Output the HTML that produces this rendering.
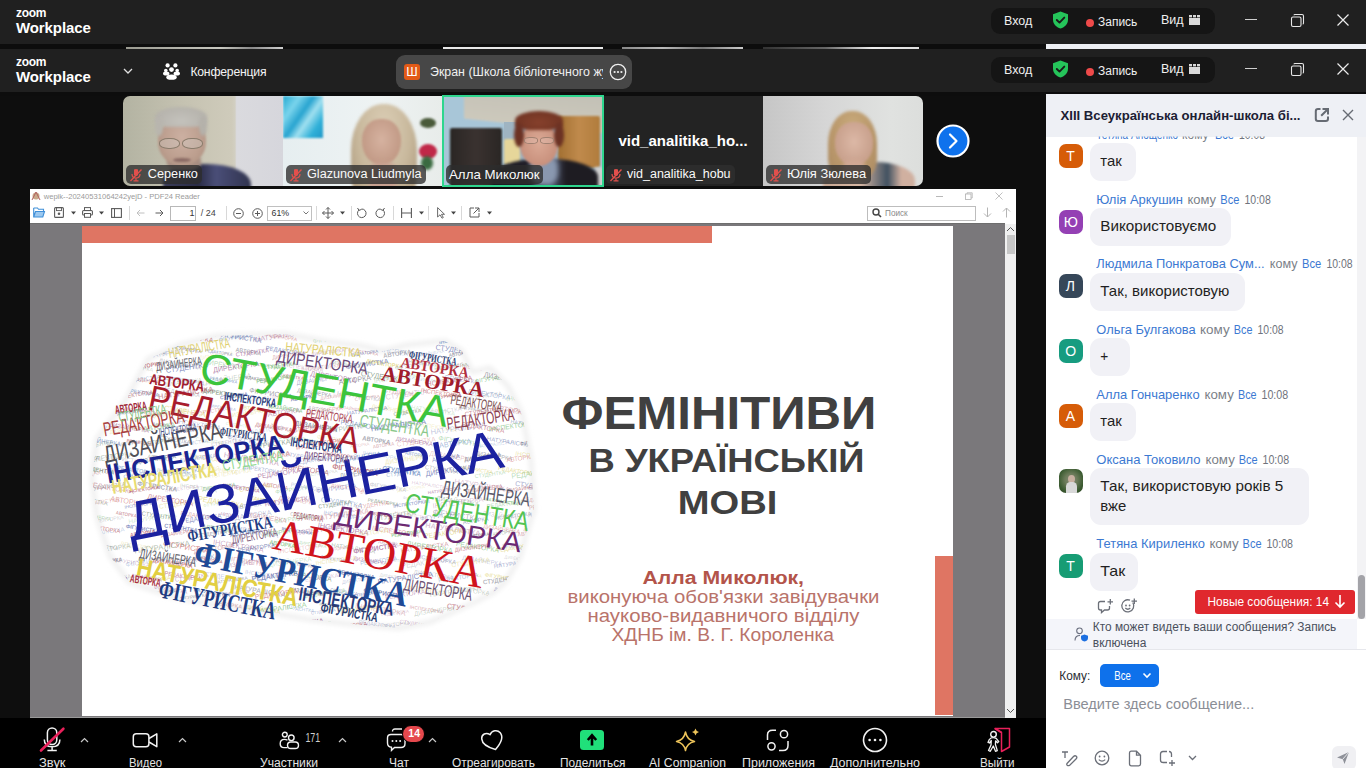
<!DOCTYPE html>
<html><head><meta charset="utf-8">
<style>
*{margin:0;padding:0;box-sizing:border-box}
html,body{width:1366px;height:768px;overflow:hidden;background:#111;font-family:"Liberation Sans",sans-serif}
.a{position:absolute}
.t{position:absolute;white-space:nowrap;line-height:1}
svg{position:absolute;overflow:visible}
</style></head><body>

<div class="a" style="left:0px;top:0px;width:1366px;height:44px;background:#202020;"></div>
<div class="t" style="left:16.00px;top:6.84px;font-size:12px;color:#fff;font-weight:700;letter-spacing:-0.3px;">zoom</div>
<div class="t" style="left:16.00px;top:19.80px;font-size:15px;color:#fff;font-weight:700;letter-spacing:-0.1px;">Workplace</div>
<div class="a" style="left:991px;top:8px;width:224px;height:26px;background:#151515;border-radius:9px;"></div>
<div class="t" style="left:1004.00px;top:14.72px;font-size:12.5px;color:#f0f0f0;">Вход</div>
<svg style="left:1052px;top:11px" width="17" height="18" viewBox="0 0 17 18"><path d="M8.5 0.5 L16 3.2 V8.5 C16 13 12.8 16.3 8.5 17.6 C4.2 16.3 1 13 1 8.5 V3.2 Z" fill="#25c45a"/><path d="M4.8 9 L7.5 11.6 L12.3 6.6" stroke="#1a1a1a" stroke-width="1.9" fill="none" stroke-linecap="round" stroke-linejoin="round"/></svg>
<div class="a" style="left:1086px;top:18.5px;width:8px;height:8px;border-radius:50%;background:#ee4a4a"></div>
<div class="t" style="left:1098.00px;top:16.14px;font-size:12px;color:#f0f0f0;">Запись</div>
<div class="t" style="left:1161.00px;top:14.02px;font-size:12.5px;color:#f0f0f0;">Вид</div>
<svg style="left:1189px;top:15px" width="11" height="10" viewBox="0 0 11 10"><rect x="0" y="3" width="11" height="7" fill="#d9d9d9"/><rect x="0" y="0" width="3" height="2.4" fill="#d9d9d9"/><rect x="4" y="0" width="3" height="2.4" fill="#d9d9d9"/><rect x="8" y="0" width="3" height="2.4" fill="#d9d9d9"/></svg>
<div class="a" style="left:1245px;top:19px;width:12px;height:1.3px;background:#cfcfcf;"></div>
<svg style="left:1290px;top:13px" width="15" height="15" viewBox="0 0 15 15"><rect x="1.5" y="4" width="9.5" height="9.5" rx="1.5" fill="none" stroke="#e8e8e8" stroke-width="1.1"/><path d="M4 2.3 Q4 1.5 5 1.5 H12 Q13.5 1.5 13.5 3 V10 Q13.5 11 12.7 11" fill="none" stroke="#e8e8e8" stroke-width="1.1"/></svg>
<svg style="left:1336px;top:13px" width="14" height="14" viewBox="0 0 14 14"><path d="M1.5 1.5 L12.5 12.5 M12.5 1.5 L1.5 12.5" stroke="#ececec" stroke-width="1.2"/></svg>
<div class="a" style="left:0px;top:44px;width:1366px;height:5px;background:#0d0d0d;"></div>
<div class="a" style="left:126px;top:47px;width:157px;height:1.6px;background:linear-gradient(90deg,#9a9a90,#c8c8c0 60%,#888 80%,#d0d0d0)"></div>
<div class="a" style="left:443px;top:47px;width:160px;height:1.6px;background:#e8e8e8"></div>
<div class="a" style="left:622px;top:47px;width:121px;height:1.6px;background:linear-gradient(90deg,#888,#bbb,#777,#ccc)"></div>
<div class="a" style="left:763px;top:47px;width:156px;height:1.6px;background:linear-gradient(90deg,#333,#666 40%,#eee 70%,#ddd)"></div>
<div class="a" style="left:1046px;top:44px;width:320px;height:5px;background:#eef0f5;"></div>
<div class="a" style="left:0px;top:49px;width:1366px;height:44px;background:#202020;"></div>
<div class="t" style="left:16.00px;top:55.84px;font-size:12px;color:#fff;font-weight:700;letter-spacing:-0.3px;">zoom</div>
<div class="t" style="left:16.00px;top:68.80px;font-size:15px;color:#fff;font-weight:700;letter-spacing:-0.1px;">Workplace</div>
<div class="a" style="left:991px;top:57px;width:224px;height:26px;background:#151515;border-radius:9px;"></div>
<div class="t" style="left:1004.00px;top:63.72px;font-size:12.5px;color:#f0f0f0;">Вход</div>
<svg style="left:1052px;top:60px" width="17" height="18" viewBox="0 0 17 18"><path d="M8.5 0.5 L16 3.2 V8.5 C16 13 12.8 16.3 8.5 17.6 C4.2 16.3 1 13 1 8.5 V3.2 Z" fill="#25c45a"/><path d="M4.8 9 L7.5 11.6 L12.3 6.6" stroke="#1a1a1a" stroke-width="1.9" fill="none" stroke-linecap="round" stroke-linejoin="round"/></svg>
<div class="a" style="left:1086px;top:67.5px;width:8px;height:8px;border-radius:50%;background:#ee4a4a"></div>
<div class="t" style="left:1098.00px;top:65.14px;font-size:12px;color:#f0f0f0;">Запись</div>
<div class="t" style="left:1161.00px;top:63.02px;font-size:12.5px;color:#f0f0f0;">Вид</div>
<svg style="left:1189px;top:64px" width="11" height="10" viewBox="0 0 11 10"><rect x="0" y="3" width="11" height="7" fill="#d9d9d9"/><rect x="0" y="0" width="3" height="2.4" fill="#d9d9d9"/><rect x="4" y="0" width="3" height="2.4" fill="#d9d9d9"/><rect x="8" y="0" width="3" height="2.4" fill="#d9d9d9"/></svg>
<div class="a" style="left:1245px;top:68px;width:12px;height:1.3px;background:#cfcfcf;"></div>
<svg style="left:1290px;top:62px" width="15" height="15" viewBox="0 0 15 15"><rect x="1.5" y="4" width="9.5" height="9.5" rx="1.5" fill="none" stroke="#e8e8e8" stroke-width="1.1"/><path d="M4 2.3 Q4 1.5 5 1.5 H12 Q13.5 1.5 13.5 3 V10 Q13.5 11 12.7 11" fill="none" stroke="#e8e8e8" stroke-width="1.1"/></svg>
<svg style="left:1336px;top:62px" width="14" height="14" viewBox="0 0 14 14"><path d="M1.5 1.5 L12.5 12.5 M12.5 1.5 L1.5 12.5" stroke="#ececec" stroke-width="1.2"/></svg>
<svg style="left:123px;top:67px" width="10" height="8" viewBox="0 0 10 8"><path d="M1 2 L5 6 L9 2" stroke="#e0e0e0" stroke-width="1.3" fill="none"/></svg>
<svg style="left:163px;top:63px" width="17" height="17" viewBox="0 0 17 17"><circle cx="4.6" cy="2.4" r="2.1" fill="#fff"/><circle cx="12.4" cy="2.4" r="2.1" fill="#fff"/><circle cx="2.8" cy="7.6" r="1.8" fill="#fff"/><circle cx="14.2" cy="7.6" r="1.8" fill="#fff"/><circle cx="8.5" cy="6.6" r="2.4" fill="#fff"/><ellipse cx="8.5" cy="14.2" rx="5.2" ry="2.6" fill="#fff"/><ellipse cx="3.2" cy="10.6" rx="3.2" ry="2" fill="#fff"/><ellipse cx="13.8" cy="10.6" rx="3.2" ry="2" fill="#fff"/></svg>
<div class="t" style="left:190.40px;top:65.87px;font-size:12.2px;color:#f4f4f4;letter-spacing:-0.2px;">Конференция</div>
<div class="a" style="left:396px;top:55px;width:236px;height:34px;background:#474747;border-radius:9px;"></div>
<div class="a" style="left:404px;top:64px;width:16px;height:16px;background:#e25a17;border-radius:3px;"></div>
<div class="t" style="left:406.30px;top:65.92px;font-size:12.5px;color:#fff;">Ш</div>
<div class="a" style="left:430px;top:60px;width:173px;height:24px;overflow:hidden">
<div class="t" style="left:0.00px;top:5.50px;font-size:12.4px;color:#f0f0f0;">Экран (Школа бібліотечного журналіста)</div>
</div>
<svg style="left:609px;top:63px" width="18" height="18" viewBox="0 0 18 18"><circle cx="9" cy="9" r="7.7" fill="none" stroke="#efefef" stroke-width="1.3"/><circle cx="5.6" cy="9" r="1.1" fill="#efefef"/><circle cx="9" cy="9" r="1.1" fill="#efefef"/><circle cx="12.4" cy="9" r="1.1" fill="#efefef"/></svg>
<div class="a" style="left:0px;top:92px;width:1046px;height:626px;background:#0e0e0e;"></div>
<div class="a" style="left:0px;top:92px;width:1046px;height:4px;background:#0d0d0d;"></div>
<div class="a" style="left:123px;top:96px;width:160px;height:90px;overflow:hidden;border-radius:7px 0 0 7px;background:linear-gradient(90deg,#b3b3a2 0%,#c6c3b2 40%,#cfcbbb 68%,#d2cfc2 70%,#dadade 71%,#d6d6dc 100%)">
<div class="a" style="left:40px;top:68px;width:88px;height:40px;border-radius:40% 50% 0 0;background:linear-gradient(90deg,#3a3c58,#2a2c46 40%,#4a4e78 60%,#30334e);filter:blur(1.5px);"></div>
<div class="a" style="left:44px;top:58px;width:34px;height:16px;border-radius:40%;background:#a88e82;filter:blur(1.5px);"></div>
<div class="a" style="left:35px;top:22px;width:48px;height:48px;border-radius:46% 46% 50% 50%;background:radial-gradient(ellipse at 50% 40%,#ccb0a2,#bc9e8e 60%,#a48878);filter:blur(1.3px);"></div>
<div class="a" style="left:32px;top:11px;width:52px;height:20px;border-radius:50% 50% 25% 25%;background:radial-gradient(ellipse at 50% 70%,#c4c2bc,#b0ada6);filter:blur(1.4px);"></div>
<div class="a" style="left:32px;top:22px;width:8px;height:18px;border-radius:50%;background:#b8b5ae;filter:blur(1.5px);"></div>
<div class="a" style="left:76px;top:20px;width:8px;height:20px;border-radius:50%;background:#b4b1aa;filter:blur(1.5px);"></div>
<div class="a" style="left:36px;top:42px;width:21px;height:11px;border-radius:45%;background:rgba(210,205,200,.35);filter:blur(0.5px);border:1.2px solid #8a7c6c;"></div>
<div class="a" style="left:59px;top:42px;width:21px;height:11px;border-radius:45%;background:rgba(210,205,200,.35);filter:blur(0.5px);border:1.2px solid #8a7c6c;"></div>
<div class="a" style="left:50px;top:62px;width:18px;height:4px;border-radius:50%;background:#8a6a64;filter:blur(1px);"></div>
</div>
<div class="a" style="left:126px;top:165px;width:76px;height:19px;border-radius:5px;background:rgba(45,45,45,.78)"></div>
<svg style="left:129px;top:168px" width="14" height="14" viewBox="0 0 14 14"><path d="M5 1.5 Q7 0.5 9 1.5 V7 Q7 9 5 7 Z" fill="#e2504c"/><path d="M3 6 Q3 10 7 10 Q11 10 11 6 M7 10 V12.5 M4.5 12.8 H9.5" stroke="#e2504c" stroke-width="1.2" fill="none"/><path d="M1.5 13 L12.5 1.5" stroke="#e2504c" stroke-width="1.3"/></svg>
<div class="t" style="left:147.80px;top:168.05px;font-size:12.7px;color:#fafafa;">Серенко</div>
<div class="a" style="left:283px;top:96px;width:159px;height:90px;overflow:hidden;background:linear-gradient(90deg,#e6eef0,#eef3f3 60%,#e8ecea)">
<div class="a" style="left:0;top:0;width:40px;height:42px;background:linear-gradient(125deg,#22a8d0 0%,#7ad4ec 25%,#28a4d0 45%,#a0e0f0 60%,#30b0d8 80%,#2098c8 100%);filter:blur(0.8px)"></div>
<div class="a" style="left:68px;top:8px;width:66px;height:96px;border-radius:48% 48% 25% 25%;background:radial-gradient(ellipse at 50% 30%,#ddd0b8,#c8b89c 55%,#a89478);filter:blur(1.5px);"></div>
<div class="a" style="left:79px;top:23px;width:39px;height:46px;border-radius:45% 45% 50% 50%;background:radial-gradient(ellipse at 50% 45%,#d6b2a0,#c29a86 70%,#a88070);filter:blur(1.2px);"></div>
<div class="a" style="left:85px;top:66px;width:30px;height:30px;border-radius:40%;background:#c8a090;filter:blur(2px);"></div>
<div class="a" style="left:136px;top:48px;width:18px;height:15px;border-radius:50%;background:#c02848;filter:blur(1.3px);"></div>
<div class="a" style="left:138px;top:60px;width:12px;height:14px;border-radius:50%;background:#3a6a40;filter:blur(1.5px);"></div>
<div class="a" style="left:137px;top:22px;width:16px;height:10px;border-radius:50%;background:#4a5a3a;filter:blur(1.3px);"></div>
</div>
<div class="a" style="left:286px;top:165px;width:140px;height:19px;border-radius:5px;background:rgba(45,45,45,.78)"></div>
<svg style="left:289px;top:168px" width="14" height="14" viewBox="0 0 14 14"><path d="M5 1.5 Q7 0.5 9 1.5 V7 Q7 9 5 7 Z" fill="#e2504c"/><path d="M3 6 Q3 10 7 10 Q11 10 11 6 M7 10 V12.5 M4.5 12.8 H9.5" stroke="#e2504c" stroke-width="1.2" fill="none"/><path d="M1.5 13 L12.5 1.5" stroke="#e2504c" stroke-width="1.3"/></svg>
<div class="t" style="left:307.00px;top:168.09px;font-size:12.65px;color:#fafafa;">Glazunova Liudmyla</div>
<div class="a" style="left:442px;top:95px;width:162px;height:92px;border:2px solid #2ed68e;overflow:hidden;background:#a8c6d8">
<div class="a" style="left:20px;top:-10px;width:160px;height:40px;background:linear-gradient(180deg,#c2c0b6,#cdc9bc);transform:skewY(6deg);filter:blur(1px)"></div>
<div class="a" style="left:60px;top:25px;width:58px;height:70px;background:#9fb4c2"></div>
<div class="a" style="left:6px;top:31px;width:52px;height:60px;border-radius:2px;background:linear-gradient(90deg,#2a2624,#3a3230 50%,#2a2624);filter:blur(0.8px);"></div>
<div class="a" style="left:60px;top:42px;width:16px;height:26px;border-radius:2px;background:#e6d69a;filter:blur(1px);"></div>
<div class="a" style="left:114px;top:19px;width:42px;height:52px;border-radius:2px;background:linear-gradient(90deg,#a27032,#c08a4c 50%,#b07c3c);filter:blur(1px);"></div>
<div class="a" style="left:150px;top:70px;width:10px;height:20px;border-radius:3px;background:#d0d0d0;filter:blur(1.5px);"></div>
<div class="a" style="left:48px;top:62px;width:106px;height:40px;border-radius:45% 45% 0 0;background:linear-gradient(90deg,#1c1a20,#22202a 40%,#505870 55%,#1e1c22 70%);filter:blur(1.5px);"></div>
<div class="a" style="left:86px;top:58px;width:28px;height:30px;border-radius:40%;background:#8a98b0;filter:blur(2.5px);"></div>
<div class="a" style="left:76px;top:27px;width:38px;height:42px;border-radius:46% 46% 50% 50%;background:radial-gradient(ellipse at 50% 45%,#dcaa96,#c8907c 70%,#b07868);filter:blur(1.2px);"></div>
<div class="a" style="left:71px;top:14px;width:48px;height:19px;border-radius:50% 50% 30% 30%;background:radial-gradient(ellipse at 50% 60%,#86402c,#6a3020);filter:blur(1.5px);"></div>
<div class="a" style="left:70px;top:26px;width:10px;height:24px;border-radius:50%;background:#6c3224;filter:blur(1.5px);"></div>
<div class="a" style="left:110px;top:26px;width:10px;height:24px;border-radius:50%;background:#6c3224;filter:blur(1.5px);"></div>
<div class="a" style="left:80px;top:40px;width:14px;height:7px;border-radius:40%;background:rgba(230,200,190,.3);filter:blur(0.5px);border:1px solid #a08070;"></div>
<div class="a" style="left:96px;top:40px;width:14px;height:7px;border-radius:40%;background:rgba(230,200,190,.3);filter:blur(0.5px);border:1px solid #a08070;"></div>
</div>
<div class="a" style="left:446px;top:165px;width:97px;height:19px;border-radius:5px;background:rgba(45,45,45,.78)"></div>
<div class="t" style="left:449.00px;top:167.54px;font-size:13.3px;color:#fafafa;">Алла Миколюк</div>
<div class="a" style="left:604px;top:96px;width:159px;height:90px;background:#232323;"></div>
<div class="t" style="left:618.40px;top:133.30px;font-size:15px;color:#fff;font-weight:700;">vid_analitika_ho...</div>
<div class="a" style="left:606px;top:165px;width:129px;height:19px;border-radius:5px;background:#2c2c2c"></div>
<svg style="left:609px;top:168px" width="14" height="14" viewBox="0 0 14 14"><path d="M5 1.5 Q7 0.5 9 1.5 V7 Q7 9 5 7 Z" fill="#e2504c"/><path d="M3 6 Q3 10 7 10 Q11 10 11 6 M7 10 V12.5 M4.5 12.8 H9.5" stroke="#e2504c" stroke-width="1.2" fill="none"/><path d="M1.5 13 L12.5 1.5" stroke="#e2504c" stroke-width="1.3"/></svg>
<div class="t" style="left:627.00px;top:168.22px;font-size:12.5px;color:#fafafa;">vid_analitika_hobu</div>
<div class="a" style="left:763px;top:96px;width:160px;height:90px;overflow:hidden;border-radius:0 7px 7px 0;background:linear-gradient(90deg,#c6c6c6,#d6d6d6 40%,#e0e2e0 80%,#dcdedc)">
<div class="a" style="left:60px;top:66px;width:92px;height:40px;border-radius:45% 45% 0 0;background:linear-gradient(90deg,#c8a894,#d8b8a4 40%,#405060 70%,#d0b0a0 85%);filter:blur(1.5px);"></div>
<div class="a" style="left:65px;top:15px;width:49px;height:68px;border-radius:48% 48% 30% 30%;background:radial-gradient(ellipse at 50% 35%,#cdb080,#b8966a 60%,#a88860);filter:blur(1.5px);"></div>
<div class="a" style="left:72px;top:26px;width:38px;height:44px;border-radius:45% 45% 50% 50%;background:radial-gradient(ellipse at 50% 45%,#dcb8a6,#c8a08c 70%,#b08878);filter:blur(1.2px);"></div>
<div class="a" style="left:80px;top:64px;width:22px;height:16px;border-radius:40%;background:#d0a894;filter:blur(2px);"></div>
</div>
<div class="a" style="left:766px;top:165px;width:105px;height:19px;border-radius:5px;background:rgba(45,45,45,.78)"></div>
<svg style="left:769px;top:168px" width="14" height="14" viewBox="0 0 14 14"><path d="M5 1.5 Q7 0.5 9 1.5 V7 Q7 9 5 7 Z" fill="#e2504c"/><path d="M3 6 Q3 10 7 10 Q11 10 11 6 M7 10 V12.5 M4.5 12.8 H9.5" stroke="#e2504c" stroke-width="1.2" fill="none"/><path d="M1.5 13 L12.5 1.5" stroke="#e2504c" stroke-width="1.3"/></svg>
<div class="t" style="left:787.00px;top:167.88px;font-size:12.9px;color:#fafafa;">Юлія Зюлева</div>
<svg style="left:936px;top:124px" width="34" height="34" viewBox="0 0 34 34"><circle cx="17" cy="17" r="15.5" fill="#0e72ed" stroke="#fff" stroke-width="2.2"/><path d="M14 10.5 L20.5 17 L14 23.5" stroke="#fff" stroke-width="2.2" fill="none" stroke-linecap="round" stroke-linejoin="round"/></svg>
<div class="a" style="left:30px;top:189px;width:986px;height:529px;background:#ffffff;"></div>
<svg style="left:31px;top:191px" width="11" height="10" viewBox="0 0 11 10"><circle cx="5" cy="5" r="3.5" fill="#c9a98a"/><path d="M1 9 L5 1 L9 9" stroke="#b06060" stroke-width="1" fill="none"/></svg>
<div class="t" style="left:43.70px;top:192.87px;font-size:7.6px;color:#9a9a9a;">wepik--20240531064242yejD - PDF24 Reader</div>
<div class="a" style="left:936px;top:196px;width:7px;height:0.8px;background:#b8b8b8;"></div>
<svg style="left:965px;top:192px" width="8" height="8" viewBox="0 0 8 8"><rect x="0.5" y="2" width="5.5" height="5.5" fill="none" stroke="#b0b0b0" stroke-width="0.8"/><path d="M2 2 V0.8 H7.2 V6 H6" fill="none" stroke="#b0b0b0" stroke-width="0.8"/></svg>
<svg style="left:995px;top:192px" width="8" height="8" viewBox="0 0 8 8"><path d="M0.5 0.5 L7.5 7.5 M7.5 0.5 L0.5 7.5" stroke="#b0b0b0" stroke-width="0.8"/></svg>
<svg style="left:33px;top:207px" width="12" height="11" viewBox="0 0 12 11"><path d="M0.7 1 H4.5 L5.5 2.3 H10.5 V4" fill="none" stroke="#3f8fd8" stroke-width="1.1"/><path d="M0.7 1 V10 H9.8 L11.5 4.5 H2.5 L0.7 10" fill="#9cc8ef" stroke="#3f8fd8" stroke-width="1.1"/></svg>
<svg style="left:54px;top:207px" width="10" height="11" viewBox="0 0 10 11"><rect x="0.6" y="0.6" width="8.8" height="9.8" rx="1" fill="none" stroke="#5a5a5a" stroke-width="1.1"/><rect x="2.5" y="0.6" width="5" height="3" fill="none" stroke="#5a5a5a" stroke-width="0.9"/><circle cx="5" cy="6.8" r="1.3" fill="#5a5a5a"/></svg>
<svg style="left:70.8px;top:211px" width="5" height="4" viewBox="0 0 5 4"><path d="M0 0.5 H5 L2.5 3.5 Z" fill="#444"/></svg>
<svg style="left:99.3px;top:211px" width="5" height="4" viewBox="0 0 5 4"><path d="M0 0.5 H5 L2.5 3.5 Z" fill="#444"/></svg>
<svg style="left:339.8px;top:211px" width="5" height="4" viewBox="0 0 5 4"><path d="M0 0.5 H5 L2.5 3.5 Z" fill="#444"/></svg>
<svg style="left:418.5px;top:211px" width="5" height="4" viewBox="0 0 5 4"><path d="M0 0.5 H5 L2.5 3.5 Z" fill="#444"/></svg>
<svg style="left:451.4px;top:211px" width="5" height="4" viewBox="0 0 5 4"><path d="M0 0.5 H5 L2.5 3.5 Z" fill="#444"/></svg>
<svg style="left:487px;top:211px" width="5" height="4" viewBox="0 0 5 4"><path d="M0 0.5 H5 L2.5 3.5 Z" fill="#444"/></svg>
<svg style="left:82px;top:207px" width="11" height="11" viewBox="0 0 11 11"><rect x="2.5" y="0.6" width="6" height="3" fill="none" stroke="#5a5a5a" stroke-width="1"/><rect x="0.6" y="3.5" width="9.8" height="4.5" rx="1" fill="none" stroke="#5a5a5a" stroke-width="1.1"/><rect x="2.5" y="6.5" width="6" height="3.8" fill="#fff" stroke="#5a5a5a" stroke-width="1"/></svg>
<svg style="left:111px;top:208px" width="11" height="10" viewBox="0 0 11 10"><rect x="0.6" y="0.6" width="9.8" height="8.8" fill="none" stroke="#5a5a5a" stroke-width="1.1"/><path d="M3.5 0.6 V9.4" stroke="#5a5a5a" stroke-width="1"/></svg>
<div class="a" style="left:129px;top:206px;width:0.8px;height:14px;background:#d8d8d8;"></div>
<div class="a" style="left:226px;top:206px;width:0.8px;height:14px;background:#d8d8d8;"></div>
<div class="a" style="left:316px;top:206px;width:0.8px;height:14px;background:#d8d8d8;"></div>
<div class="a" style="left:351px;top:206px;width:0.8px;height:14px;background:#d8d8d8;"></div>
<div class="a" style="left:393px;top:206px;width:0.8px;height:14px;background:#d8d8d8;"></div>
<div class="a" style="left:428px;top:206px;width:0.8px;height:14px;background:#d8d8d8;"></div>
<div class="a" style="left:461px;top:206px;width:0.8px;height:14px;background:#d8d8d8;"></div>
<svg style="left:136px;top:209px" width="9" height="8" viewBox="0 0 9 8"><path d="M8.5 4 H1 M4 1 L1 4 L4 7" stroke="#c0c0c0" stroke-width="1" fill="none"/></svg>
<svg style="left:155px;top:209px" width="9" height="8" viewBox="0 0 9 8"><path d="M0.5 4 H8 M5 1 L8 4 L5 7" stroke="#5a5a5a" stroke-width="1" fill="none"/></svg>
<div class="a" style="left:169.6px;top:205.9px;width:26px;height:15px;background:#fff;border:0.8px solid #b8b8b8;"></div>
<div class="t" style="left:189.50px;top:209.18px;font-size:9px;color:#333;">1</div>
<div class="t" style="left:200.70px;top:209.18px;font-size:9px;color:#444;">/ 24</div>
<svg style="left:233px;top:208px" width="11" height="11" viewBox="0 0 11 11"><circle cx="5.5" cy="5.5" r="4.8" fill="none" stroke="#5a5a5a" stroke-width="1"/><path d="M3 5.5 H8" stroke="#5a5a5a" stroke-width="1"/></svg>
<svg style="left:252px;top:208px" width="11" height="11" viewBox="0 0 11 11"><circle cx="5.5" cy="5.5" r="4.8" fill="none" stroke="#5a5a5a" stroke-width="1"/><path d="M3 5.5 H8 M5.5 3 V8" stroke="#5a5a5a" stroke-width="1"/></svg>
<div class="a" style="left:267.3px;top:205.9px;width:44.3px;height:15px;background:#fff;border:0.8px solid #c0c0c0;"></div>
<div class="t" style="left:271.50px;top:209.15px;font-size:8.8px;color:#333;">61%</div>
<svg style="left:303px;top:211px" width="6" height="4" viewBox="0 0 6 4"><path d="M0.5 0.5 L3 3 L5.5 0.5" stroke="#666" stroke-width="0.9" fill="none"/></svg>
<svg style="left:322px;top:207px" width="12" height="12" viewBox="0 0 12 12"><path d="M6 0.5 V11.5 M0.5 6 H11.5 M4 2.5 L6 0.5 L8 2.5 M4 9.5 L6 11.5 L8 9.5 M2.5 4 L0.5 6 L2.5 8 M9.5 4 L11.5 6 L9.5 8" stroke="#5a5a5a" stroke-width="1" fill="none"/></svg>
<svg style="left:356px;top:207px" width="11" height="12" viewBox="0 0 11 12"><path d="M3 3 A4.3 4.3 0 1 0 5.5 2 " stroke="#5a5a5a" stroke-width="1" fill="none"/><path d="M1.5 1 L3 3.3 L5.5 2.5" stroke="#5a5a5a" stroke-width="1" fill="none"/></svg>
<svg style="left:375px;top:207px" width="11" height="12" viewBox="0 0 11 12"><path d="M8 3 A4.3 4.3 0 1 1 5.5 2 " stroke="#5a5a5a" stroke-width="1" fill="none"/><path d="M9.5 1 L8 3.3 L5.5 2.5" stroke="#5a5a5a" stroke-width="1" fill="none"/></svg>
<svg style="left:401px;top:208px" width="11" height="10" viewBox="0 0 11 10"><path d="M0.6 0 V10 M10.4 0 V10 M0.6 5 H10.4" stroke="#5a5a5a" stroke-width="1.1" fill="none"/></svg>
<svg style="left:437px;top:207px" width="8" height="12" viewBox="0 0 8 12"><path d="M0.6 0.6 V10 L3 7.8 L5 11.2 L6.3 10.5 L4.5 7.3 L7.5 7.3 Z" stroke="#5a5a5a" stroke-width="0.9" fill="none"/></svg>
<svg style="left:469px;top:207px" width="11" height="11" viewBox="0 0 11 11"><path d="M5 1 H1 V10 H10 V6" stroke="#5a5a5a" stroke-width="1" fill="none"/><path d="M6 1 H10 V5 M10 1 L4.5 6.5" stroke="#5a5a5a" stroke-width="1" fill="none"/></svg>
<div class="a" style="left:867.3px;top:206px;width:109.2px;height:14.6px;background:#fff;border:0.8px solid #bdbdbd;"></div>
<svg style="left:872px;top:208px" width="10" height="10" viewBox="0 0 10 10"><circle cx="4" cy="4" r="3" fill="none" stroke="#444" stroke-width="1.4"/><path d="M6.2 6.2 L9 9" stroke="#444" stroke-width="1.6"/></svg>
<div class="t" style="left:885.00px;top:209.56px;font-size:8.2px;color:#8a8a8a;">Поиск</div>
<svg style="left:983px;top:207px" width="9" height="11" viewBox="0 0 9 11"><path d="M4.5 0.5 V10 M1 6.5 L4.5 10 L8 6.5" stroke="#b4b4b4" stroke-width="1" fill="none"/></svg>
<svg style="left:1002px;top:207px" width="9" height="11" viewBox="0 0 9 11"><path d="M4.5 10.5 V1 M1 4.5 L4.5 1 L8 4.5" stroke="#b4b4b4" stroke-width="1" fill="none"/></svg>
<div class="a" style="left:30px;top:223px;width:975px;height:1.2px;background:#6e6e6e;"></div>
<div class="a" style="left:30px;top:224px;width:975px;height:494px;background:#7a787b;"></div>
<div class="a" style="left:1005px;top:224px;width:11px;height:494px;background:#f0f0f0;"></div>
<svg style="left:1006px;top:226px" width="9" height="6" viewBox="0 0 9 6"><path d="M1 5 L4.5 1.5 L8 5" stroke="#555" stroke-width="1" fill="none"/></svg>
<div class="a" style="left:1006.5px;top:235px;width:8px;height:19px;background:#c6c6c6;"></div>
<svg style="left:1006px;top:708px" width="9" height="6" viewBox="0 0 9 6"><path d="M1 1 L4.5 4.5 L8 1" stroke="#555" stroke-width="1" fill="none"/></svg>
<div class="a" style="left:30px;top:716.5px;width:975px;height:1.5px;background:#9a9a9a;"></div>
<div class="a" style="left:82px;top:226px;width:871px;height:490px;background:#ffffff;"></div>
<div class="a" style="left:82px;top:226px;width:630px;height:17px;background:#df7563;"></div>
<div class="a" style="left:935px;top:556px;width:17.5px;height:158.5px;background:#df7563;"></div>
<svg style="left:0;top:0" width="1366" height="768" viewBox="0 0 1366 768"><text x="0" y="0" transform="translate(561.5,429.0) rotate(0)" font-size="45.5" fill="#404040" font-weight="700" textLength="315.0" lengthAdjust="spacingAndGlyphs">ФЕМІНІТИВИ</text><text x="0" y="0" transform="translate(588.6,471.7) rotate(0)" font-size="33.5" fill="#404040" font-weight="700" textLength="275.8" lengthAdjust="spacingAndGlyphs">В УКРАЇНСЬКІЙ</text><text x="0" y="0" transform="translate(677.7,513.5) rotate(0)" font-size="33.5" fill="#404040" font-weight="700" textLength="99.6" lengthAdjust="spacingAndGlyphs">МОВІ</text><text x="0" y="0" transform="translate(642.5,584.3) rotate(0)" font-size="18.7" fill="#b3544a" font-weight="700" textLength="161.5" lengthAdjust="spacingAndGlyphs">Алла Миколюк,</text><text x="0" y="0" transform="translate(567.5,603.4) rotate(0)" font-size="17.5" fill="#b9736a" textLength="312.0" lengthAdjust="spacingAndGlyphs">виконуюча обов&#39;язки завідувачки</text><text x="0" y="0" transform="translate(587.5,622.4) rotate(0)" font-size="17.5" fill="#b9736a" textLength="272.0" lengthAdjust="spacingAndGlyphs">науково-видавничого відділу</text><text x="0" y="0" transform="translate(611.5,640.9) rotate(0)" font-size="17.5" fill="#b9736a" textLength="222.5" lengthAdjust="spacingAndGlyphs">ХДНБ ім. В. Г. Короленка</text><defs><clipPath id="cc"><polygon points="126,400 148,359 180,345 217,336 285,334 330,342 363,346 383,351 407,345 445,341 462,351 472,372 490,368 508,386 522,414 531,460 534,510 526,534 520,557 506,581 494,592 477,601 455,611 430,622 399,628 350,624 308,619 253,610 210,604 171,596 129,582 110,556 97,517 92,478 97,439"/></clipPath><filter id="bl" x="-5%" y="-5%" width="110%" height="110%"><feGaussianBlur stdDeviation="2.5"/></filter></defs><polygon points="126,400 148,359 180,345 217,336 285,334 330,342 363,346 383,351 407,345 445,341 462,351 472,372 490,368 508,386 522,414 531,460 534,510 526,534 520,557 506,581 494,592 477,601 455,611 430,622 399,628 350,624 308,619 253,610 210,604 171,596 129,582 110,556 97,517 92,478 97,439" fill="none" stroke="#ececec" stroke-width="4" filter="url(#bl)"/><g clip-path="url(#cc)"><text x="0" y="0" transform="translate(74.5,334.2) rotate(9)" font-size="7" fill="#5a5a6a" fill-opacity="0.3" font-weight="700" textLength="43.4" lengthAdjust="spacingAndGlyphs">РЕДАКТОРКА</text><text x="0" y="0" transform="translate(121.3,334.3) rotate(9)" font-size="6" fill="#a03040" fill-opacity="0.3" textLength="26.0" lengthAdjust="spacingAndGlyphs">АВТОРКА</text><text x="0" y="0" transform="translate(150.3,334.5) rotate(9)" font-size="4.5" fill="#c04040" fill-opacity="0.6" textLength="27.9" lengthAdjust="spacingAndGlyphs">ДИРЕКТОРКА</text><text x="0" y="0" transform="translate(182.8,337.9) rotate(9)" font-size="7" fill="#a03040" fill-opacity="0.6" textLength="30.4" lengthAdjust="spacingAndGlyphs">АВТОРКА</text><text x="0" y="0" transform="translate(218.6,336.2) rotate(9)" font-size="7" fill="#2a3a8a" fill-opacity="0.45" font-weight="700" textLength="43.4" lengthAdjust="spacingAndGlyphs">ФІГУРИСТКА</text><text x="0" y="0" transform="translate(266.2,336.3) rotate(9)" font-size="5" fill="#c04040" fill-opacity="0.45" textLength="31.0" lengthAdjust="spacingAndGlyphs">РЕДАКТОРКА</text><text x="0" y="0" transform="translate(299.6,334.8) rotate(9)" font-size="4.5" fill="#c04040" fill-opacity="0.6" font-weight="700" textLength="27.9" lengthAdjust="spacingAndGlyphs">ДИЗАЙНЕРКА</text><text x="0" y="0" transform="translate(331.2,337.7) rotate(9)" font-size="7.5" fill="#c04040" fill-opacity="0.45" textLength="51.1" lengthAdjust="spacingAndGlyphs">ІНСПЕКТОРКА</text><text x="0" y="0" transform="translate(385.4,336.3) rotate(9)" font-size="6" fill="#b04050" fill-opacity="0.45" font-weight="700" textLength="37.2" lengthAdjust="spacingAndGlyphs">РЕДАКТОРКА</text><text x="0" y="0" transform="translate(428.1,337.9) rotate(9)" font-size="6" fill="#c04040" fill-opacity="0.6" textLength="44.6" lengthAdjust="spacingAndGlyphs">НАТУРАЛІСТКА</text><text x="0" y="0" transform="translate(476.4,335.7) rotate(9)" font-size="5.5" fill="#707080" fill-opacity="0.3" font-weight="700" textLength="37.5" lengthAdjust="spacingAndGlyphs">ІНСПЕКТОРКА</text><text x="0" y="0" transform="translate(518.9,335.4) rotate(9)" font-size="6.5" fill="#3c6ab0" fill-opacity="0.6" textLength="44.3" lengthAdjust="spacingAndGlyphs">ІНСПЕКТОРКА</text><text x="0" y="0" transform="translate(69.9,343.3) rotate(-8)" font-size="7.5" fill="#3c6ab0" fill-opacity="0.6" textLength="46.5" lengthAdjust="spacingAndGlyphs">ФІГУРИСТКА</text><text x="0" y="0" transform="translate(121.2,342.2) rotate(-8)" font-size="6" fill="#3c6ab0" fill-opacity="0.45" font-weight="700" textLength="44.6" lengthAdjust="spacingAndGlyphs">НАТУРАЛІСТКА</text><text x="0" y="0" transform="translate(167.9,343.1) rotate(-8)" font-size="6.5" fill="#2a3a8a" fill-opacity="0.3" textLength="48.4" lengthAdjust="spacingAndGlyphs">НАТУРАЛІСТКА</text><text x="0" y="0" transform="translate(219.1,341.6) rotate(-8)" font-size="5.5" fill="#3c6ab0" fill-opacity="0.45" textLength="34.1" lengthAdjust="spacingAndGlyphs">ФІГУРИСТКА</text><text x="0" y="0" transform="translate(255.6,341.7) rotate(-8)" font-size="7" fill="#8a3a7a" fill-opacity="0.45" textLength="52.1" lengthAdjust="spacingAndGlyphs">НАТУРАЛІСТКА</text><text x="0" y="0" transform="translate(313.1,343.4) rotate(-8)" font-size="7" fill="#60b060" fill-opacity="0.3" textLength="43.4" lengthAdjust="spacingAndGlyphs">ФІГУРИСТКА</text><text x="0" y="0" transform="translate(359.1,343.3) rotate(-8)" font-size="5.5" fill="#3a4a9a" fill-opacity="0.45" textLength="34.1" lengthAdjust="spacingAndGlyphs">РЕДАКТОРКА</text><text x="0" y="0" transform="translate(398.5,340.7) rotate(-8)" font-size="6" fill="#507050" fill-opacity="0.6" textLength="37.2" lengthAdjust="spacingAndGlyphs">РЕДАКТОРКА</text><text x="0" y="0" transform="translate(439.2,344.1) rotate(-8)" font-size="5.5" fill="#3c6ab0" fill-opacity="0.6" font-weight="700" textLength="37.5" lengthAdjust="spacingAndGlyphs">ІНСПЕКТОРКА</text><text x="0" y="0" transform="translate(481.4,343.8) rotate(-8)" font-size="7.5" fill="#5a5a6a" fill-opacity="0.45" textLength="32.5" lengthAdjust="spacingAndGlyphs">АВТОРКА</text><text x="0" y="0" transform="translate(517.6,342.2) rotate(-8)" font-size="7.5" fill="#5a5a6a" fill-opacity="0.3" textLength="46.5" lengthAdjust="spacingAndGlyphs">ДИЗАЙНЕРКА</text><text x="0" y="0" transform="translate(70.2,350.3) rotate(9)" font-size="5" fill="#a03040" fill-opacity="0.3" font-weight="700" textLength="21.7" lengthAdjust="spacingAndGlyphs">АВТОРКА</text><text x="0" y="0" transform="translate(97.7,350.5) rotate(9)" font-size="5" fill="#3a4a9a" fill-opacity="0.6" textLength="21.7" lengthAdjust="spacingAndGlyphs">АВТОРКА</text><text x="0" y="0" transform="translate(122.4,348.5) rotate(9)" font-size="6.5" fill="#707080" fill-opacity="0.45" textLength="44.3" lengthAdjust="spacingAndGlyphs">ІНСПЕКТОРКА</text><text x="0" y="0" transform="translate(170.7,348.4) rotate(9)" font-size="5" fill="#2a3a8a" fill-opacity="0.6" textLength="31.0" lengthAdjust="spacingAndGlyphs">ФІГУРИСТКА</text><text x="0" y="0" transform="translate(204.7,351.8) rotate(9)" font-size="4.5" fill="#3a4a9a" fill-opacity="0.45" font-weight="700" textLength="27.9" lengthAdjust="spacingAndGlyphs">РЕДАКТОРКА</text><text x="0" y="0" transform="translate(235.2,351.5) rotate(9)" font-size="6" fill="#5a5a6a" fill-opacity="0.45" font-weight="700" textLength="26.0" lengthAdjust="spacingAndGlyphs">АВТОРКА</text><text x="0" y="0" transform="translate(265.3,350.1) rotate(9)" font-size="6.5" fill="#3a4a9a" fill-opacity="0.45" font-weight="700" textLength="40.3" lengthAdjust="spacingAndGlyphs">РЕДАКТОРКА</text><text x="0" y="0" transform="translate(310.2,351.0) rotate(9)" font-size="6" fill="#d8c850" fill-opacity="0.3" textLength="33.5" lengthAdjust="spacingAndGlyphs">СТУДЕНТКА</text><text x="0" y="0" transform="translate(347.7,351.2) rotate(9)" font-size="4.5" fill="#a03040" fill-opacity="0.45" textLength="30.7" lengthAdjust="spacingAndGlyphs">ІНСПЕКТОРКА</text><text x="0" y="0" transform="translate(381.2,352.0) rotate(9)" font-size="7.5" fill="#3c6ab0" fill-opacity="0.3" textLength="51.1" lengthAdjust="spacingAndGlyphs">ІНСПЕКТОРКА</text><text x="0" y="0" transform="translate(435.2,349.4) rotate(9)" font-size="7.5" fill="#3a4a9a" fill-opacity="0.6" textLength="41.9" lengthAdjust="spacingAndGlyphs">СТУДЕНТКА</text><text x="0" y="0" transform="translate(483.0,349.4) rotate(9)" font-size="7.5" fill="#5a5a6a" fill-opacity="0.3" font-weight="700" textLength="32.5" lengthAdjust="spacingAndGlyphs">АВТОРКА</text><text x="0" y="0" transform="translate(520.9,351.0) rotate(9)" font-size="7" fill="#3c6ab0" fill-opacity="0.3" textLength="43.4" lengthAdjust="spacingAndGlyphs">ДИЗАЙНЕРКА</text><text x="0" y="0" transform="translate(69.7,358.8) rotate(-8)" font-size="7.5" fill="#d8c850" fill-opacity="0.6" textLength="46.5" lengthAdjust="spacingAndGlyphs">ДИРЕКТОРКА</text><text x="0" y="0" transform="translate(118.9,358.2) rotate(-8)" font-size="4.5" fill="#2a3a8a" fill-opacity="0.6" textLength="27.9" lengthAdjust="spacingAndGlyphs">РЕДАКТОРКА</text><text x="0" y="0" transform="translate(149.4,358.0) rotate(-8)" font-size="6.5" fill="#2a3a8a" fill-opacity="0.3" textLength="48.4" lengthAdjust="spacingAndGlyphs">НАТУРАЛІСТКА</text><text x="0" y="0" transform="translate(199.8,359.7) rotate(-8)" font-size="5.5" fill="#d8c850" fill-opacity="0.3" textLength="34.1" lengthAdjust="spacingAndGlyphs">ДИЗАЙНЕРКА</text><text x="0" y="0" transform="translate(236.0,356.8) rotate(-8)" font-size="6" fill="#8a3a7a" fill-opacity="0.45" font-weight="700" textLength="33.5" lengthAdjust="spacingAndGlyphs">СТУДЕНТКА</text><text x="0" y="0" transform="translate(272.5,359.4) rotate(-8)" font-size="5.5" fill="#a03040" fill-opacity="0.45" textLength="34.1" lengthAdjust="spacingAndGlyphs">ДИРЕКТОРКА</text><text x="0" y="0" transform="translate(311.3,356.4) rotate(-8)" font-size="5.5" fill="#8a3a7a" fill-opacity="0.3" font-weight="700" textLength="34.1" lengthAdjust="spacingAndGlyphs">ДИРЕКТОРКА</text><text x="0" y="0" transform="translate(350.8,356.5) rotate(-8)" font-size="4.5" fill="#2a3a8a" fill-opacity="0.6" textLength="27.9" lengthAdjust="spacingAndGlyphs">РЕДАКТОРКА</text><text x="0" y="0" transform="translate(383.6,357.9) rotate(-8)" font-size="6.5" fill="#5a5a6a" fill-opacity="0.45" font-weight="700" textLength="28.2" lengthAdjust="spacingAndGlyphs">АВТОРКА</text><text x="0" y="0" transform="translate(417.0,356.6) rotate(-8)" font-size="4.5" fill="#3a4a9a" fill-opacity="0.3" textLength="27.9" lengthAdjust="spacingAndGlyphs">ДИЗАЙНЕРКА</text><text x="0" y="0" transform="translate(448.9,357.1) rotate(-8)" font-size="5" fill="#707080" fill-opacity="0.6" font-weight="700" textLength="21.7" lengthAdjust="spacingAndGlyphs">АВТОРКА</text><text x="0" y="0" transform="translate(474.7,357.9) rotate(-8)" font-size="7.5" fill="#8a3a7a" fill-opacity="0.6" textLength="46.5" lengthAdjust="spacingAndGlyphs">ФІГУРИСТКА</text><text x="0" y="0" transform="translate(526.9,356.3) rotate(-8)" font-size="6" fill="#707080" fill-opacity="0.45" textLength="37.2" lengthAdjust="spacingAndGlyphs">ФІГУРИСТКА</text><text x="0" y="0" transform="translate(72.8,363.6) rotate(9)" font-size="6" fill="#5a5a6a" fill-opacity="0.3" textLength="37.2" lengthAdjust="spacingAndGlyphs">ДИЗАЙНЕРКА</text><text x="0" y="0" transform="translate(115.8,366.0) rotate(9)" font-size="5.5" fill="#507050" fill-opacity="0.3" textLength="37.5" lengthAdjust="spacingAndGlyphs">ІНСПЕКТОРКА</text><text x="0" y="0" transform="translate(158.3,363.1) rotate(9)" font-size="7" fill="#707080" fill-opacity="0.3" font-weight="700" textLength="43.4" lengthAdjust="spacingAndGlyphs">ДИЗАЙНЕРКА</text><text x="0" y="0" transform="translate(204.3,364.1) rotate(9)" font-size="7" fill="#60b060" fill-opacity="0.45" textLength="43.4" lengthAdjust="spacingAndGlyphs">ДИРЕКТОРКА</text><text x="0" y="0" transform="translate(250.1,364.7) rotate(9)" font-size="4.5" fill="#60b060" fill-opacity="0.6" textLength="30.7" lengthAdjust="spacingAndGlyphs">ІНСПЕКТОРКА</text><text x="0" y="0" transform="translate(282.8,366.3) rotate(9)" font-size="6" fill="#8a3a7a" fill-opacity="0.3" textLength="40.9" lengthAdjust="spacingAndGlyphs">ІНСПЕКТОРКА</text><text x="0" y="0" transform="translate(329.7,363.5) rotate(9)" font-size="5" fill="#507050" fill-opacity="0.45" textLength="31.0" lengthAdjust="spacingAndGlyphs">ДИЗАЙНЕРКА</text><text x="0" y="0" transform="translate(365.7,363.0) rotate(9)" font-size="6" fill="#d8c850" fill-opacity="0.6" font-weight="700" textLength="37.2" lengthAdjust="spacingAndGlyphs">ДИРЕКТОРКА</text><text x="0" y="0" transform="translate(406.9,362.7) rotate(9)" font-size="5" fill="#507050" fill-opacity="0.3" font-weight="700" textLength="34.1" lengthAdjust="spacingAndGlyphs">ІНСПЕКТОРКА</text><text x="0" y="0" transform="translate(444.7,365.0) rotate(9)" font-size="6" fill="#a03040" fill-opacity="0.3" textLength="37.2" lengthAdjust="spacingAndGlyphs">ДИЗАЙНЕРКА</text><text x="0" y="0" transform="translate(486.3,365.9) rotate(9)" font-size="5" fill="#507050" fill-opacity="0.3" textLength="27.9" lengthAdjust="spacingAndGlyphs">СТУДЕНТКА</text><text x="0" y="0" transform="translate(517.5,363.0) rotate(9)" font-size="6" fill="#c04040" fill-opacity="0.6" font-weight="700" textLength="37.2" lengthAdjust="spacingAndGlyphs">ДИРЕКТОРКА</text><text x="0" y="0" transform="translate(71.2,372.9) rotate(-8)" font-size="5.5" fill="#3a4a9a" fill-opacity="0.45" font-weight="700" textLength="23.9" lengthAdjust="spacingAndGlyphs">АВТОРКА</text><text x="0" y="0" transform="translate(99.2,371.2) rotate(-8)" font-size="6" fill="#707080" fill-opacity="0.45" textLength="33.5" lengthAdjust="spacingAndGlyphs">СТУДЕНТКА</text><text x="0" y="0" transform="translate(136.1,369.2) rotate(-8)" font-size="6" fill="#a03040" fill-opacity="0.6" font-weight="700" textLength="26.0" lengthAdjust="spacingAndGlyphs">АВТОРКА</text><text x="0" y="0" transform="translate(166.3,372.9) rotate(-8)" font-size="7.5" fill="#3a4a9a" fill-opacity="0.6" textLength="41.9" lengthAdjust="spacingAndGlyphs">СТУДЕНТКА</text><text x="0" y="0" transform="translate(213.5,372.5) rotate(-8)" font-size="7.5" fill="#8a3a7a" fill-opacity="0.6" textLength="46.5" lengthAdjust="spacingAndGlyphs">ДИРЕКТОРКА</text><text x="0" y="0" transform="translate(263.2,369.9) rotate(-8)" font-size="6" fill="#60b060" fill-opacity="0.6" font-weight="700" textLength="33.5" lengthAdjust="spacingAndGlyphs">СТУДЕНТКА</text><text x="0" y="0" transform="translate(301.2,372.5) rotate(-8)" font-size="6.5" fill="#a03040" fill-opacity="0.3" textLength="40.3" lengthAdjust="spacingAndGlyphs">ДИРЕКТОРКА</text><text x="0" y="0" transform="translate(346.0,369.4) rotate(-8)" font-size="7" fill="#2a3a8a" fill-opacity="0.45" font-weight="700" textLength="43.4" lengthAdjust="spacingAndGlyphs">ФІГУРИСТКА</text><text x="0" y="0" transform="translate(394.9,370.3) rotate(-8)" font-size="6" fill="#3c6ab0" fill-opacity="0.3" textLength="37.2" lengthAdjust="spacingAndGlyphs">ФІГУРИСТКА</text><text x="0" y="0" transform="translate(434.7,370.6) rotate(-8)" font-size="4.5" fill="#507050" fill-opacity="0.6" textLength="33.5" lengthAdjust="spacingAndGlyphs">НАТУРАЛІСТКА</text><text x="0" y="0" transform="translate(471.5,370.6) rotate(-8)" font-size="6" fill="#3a4a9a" fill-opacity="0.45" textLength="26.0" lengthAdjust="spacingAndGlyphs">АВТОРКА</text><text x="0" y="0" transform="translate(501.1,371.8) rotate(-8)" font-size="6" fill="#8a3a7a" fill-opacity="0.6" textLength="44.6" lengthAdjust="spacingAndGlyphs">НАТУРАЛІСТКА</text><text x="0" y="0" transform="translate(84.3,376.0) rotate(9)" font-size="7" fill="#c04040" fill-opacity="0.45" textLength="43.4" lengthAdjust="spacingAndGlyphs">РЕДАКТОРКА</text><text x="0" y="0" transform="translate(131.0,379.7) rotate(9)" font-size="5" fill="#c04040" fill-opacity="0.6" textLength="27.9" lengthAdjust="spacingAndGlyphs">СТУДЕНТКА</text><text x="0" y="0" transform="translate(164.4,379.8) rotate(9)" font-size="6.5" fill="#3c6ab0" fill-opacity="0.45" textLength="40.3" lengthAdjust="spacingAndGlyphs">ДИРЕКТОРКА</text><text x="0" y="0" transform="translate(209.6,379.4) rotate(9)" font-size="4.5" fill="#3c6ab0" fill-opacity="0.45" font-weight="700" textLength="27.9" lengthAdjust="spacingAndGlyphs">РЕДАКТОРКА</text><text x="0" y="0" transform="translate(242.5,378.2) rotate(9)" font-size="4.5" fill="#5a5a6a" fill-opacity="0.6" font-weight="700" textLength="27.9" lengthAdjust="spacingAndGlyphs">РЕДАКТОРКА</text><text x="0" y="0" transform="translate(276.2,376.0) rotate(9)" font-size="5" fill="#a03040" fill-opacity="0.45" font-weight="700" textLength="27.9" lengthAdjust="spacingAndGlyphs">СТУДЕНТКА</text><text x="0" y="0" transform="translate(309.9,376.0) rotate(9)" font-size="7.5" fill="#8a3a7a" fill-opacity="0.6" textLength="46.5" lengthAdjust="spacingAndGlyphs">ДИРЕКТОРКА</text><text x="0" y="0" transform="translate(360.5,375.8) rotate(9)" font-size="7.5" fill="#507050" fill-opacity="0.6" textLength="41.9" lengthAdjust="spacingAndGlyphs">СТУДЕНТКА</text><text x="0" y="0" transform="translate(408.1,378.8) rotate(9)" font-size="5" fill="#3c6ab0" fill-opacity="0.3" textLength="31.0" lengthAdjust="spacingAndGlyphs">ДИЗАЙНЕРКА</text><text x="0" y="0" transform="translate(444.5,378.8) rotate(9)" font-size="6" fill="#3a4a9a" fill-opacity="0.45" textLength="33.5" lengthAdjust="spacingAndGlyphs">СТУДЕНТКА</text><text x="0" y="0" transform="translate(483.4,377.0) rotate(9)" font-size="7.5" fill="#5a5a6a" fill-opacity="0.6" textLength="46.5" lengthAdjust="spacingAndGlyphs">ДИЗАЙНЕРКА</text><text x="0" y="0" transform="translate(534.4,376.4) rotate(9)" font-size="5" fill="#c04040" fill-opacity="0.6" textLength="27.9" lengthAdjust="spacingAndGlyphs">СТУДЕНТКА</text><text x="0" y="0" transform="translate(79.4,384.9) rotate(-8)" font-size="7.5" fill="#a03040" fill-opacity="0.3" font-weight="700" textLength="32.5" lengthAdjust="spacingAndGlyphs">АВТОРКА</text><text x="0" y="0" transform="translate(116.7,385.0) rotate(-8)" font-size="6" fill="#3c6ab0" fill-opacity="0.45" textLength="44.6" lengthAdjust="spacingAndGlyphs">НАТУРАЛІСТКА</text><text x="0" y="0" transform="translate(165.2,386.9) rotate(-8)" font-size="6" fill="#507050" fill-opacity="0.3" textLength="37.2" lengthAdjust="spacingAndGlyphs">ДИЗАЙНЕРКА</text><text x="0" y="0" transform="translate(205.5,384.5) rotate(-8)" font-size="7.5" fill="#507050" fill-opacity="0.3" textLength="46.5" lengthAdjust="spacingAndGlyphs">ДИЗАЙНЕРКА</text><text x="0" y="0" transform="translate(256.4,383.5) rotate(-8)" font-size="6" fill="#60b060" fill-opacity="0.6" font-weight="700" textLength="37.2" lengthAdjust="spacingAndGlyphs">РЕДАКТОРКА</text><text x="0" y="0" transform="translate(296.7,384.9) rotate(-8)" font-size="6.5" fill="#3a4a9a" fill-opacity="0.45" textLength="40.3" lengthAdjust="spacingAndGlyphs">ДИЗАЙНЕРКА</text><text x="0" y="0" transform="translate(339.1,384.7) rotate(-8)" font-size="7.5" fill="#5a5a6a" fill-opacity="0.6" textLength="32.5" lengthAdjust="spacingAndGlyphs">АВТОРКА</text><text x="0" y="0" transform="translate(374.2,383.4) rotate(-8)" font-size="7" fill="#60b060" fill-opacity="0.3" textLength="47.7" lengthAdjust="spacingAndGlyphs">ІНСПЕКТОРКА</text><text x="0" y="0" transform="translate(425.2,386.7) rotate(-8)" font-size="7" fill="#b04050" fill-opacity="0.6" textLength="47.7" lengthAdjust="spacingAndGlyphs">ІНСПЕКТОРКА</text><text x="0" y="0" transform="translate(475.0,383.2) rotate(-8)" font-size="6" fill="#60b060" fill-opacity="0.6" textLength="37.2" lengthAdjust="spacingAndGlyphs">ФІГУРИСТКА</text><text x="0" y="0" transform="translate(514.5,384.1) rotate(-8)" font-size="6" fill="#a03040" fill-opacity="0.6" textLength="37.2" lengthAdjust="spacingAndGlyphs">ДИРЕКТОРКА</text><text x="0" y="0" transform="translate(73.0,392.6) rotate(9)" font-size="7" fill="#8a3a7a" fill-opacity="0.45" textLength="43.4" lengthAdjust="spacingAndGlyphs">ФІГУРИСТКА</text><text x="0" y="0" transform="translate(121.9,391.6) rotate(9)" font-size="6" fill="#3c6ab0" fill-opacity="0.45" font-weight="700" textLength="37.2" lengthAdjust="spacingAndGlyphs">ДИРЕКТОРКА</text><text x="0" y="0" transform="translate(162.9,391.5) rotate(9)" font-size="6" fill="#707080" fill-opacity="0.3" font-weight="700" textLength="37.2" lengthAdjust="spacingAndGlyphs">РЕДАКТОРКА</text><text x="0" y="0" transform="translate(202.8,392.5) rotate(9)" font-size="6.5" fill="#507050" fill-opacity="0.6" font-weight="700" textLength="40.3" lengthAdjust="spacingAndGlyphs">ДИРЕКТОРКА</text><text x="0" y="0" transform="translate(249.0,392.3) rotate(9)" font-size="7" fill="#5a5a6a" fill-opacity="0.6" textLength="43.4" lengthAdjust="spacingAndGlyphs">ФІГУРИСТКА</text><text x="0" y="0" transform="translate(297.1,392.0) rotate(9)" font-size="5.5" fill="#5a5a6a" fill-opacity="0.6" textLength="34.1" lengthAdjust="spacingAndGlyphs">ДИЗАЙНЕРКА</text><text x="0" y="0" transform="translate(336.8,394.9) rotate(9)" font-size="6" fill="#707080" fill-opacity="0.45" textLength="44.6" lengthAdjust="spacingAndGlyphs">НАТУРАЛІСТКА</text><text x="0" y="0" transform="translate(384.0,392.0) rotate(9)" font-size="6" fill="#b04050" fill-opacity="0.3" font-weight="700" textLength="33.5" lengthAdjust="spacingAndGlyphs">СТУДЕНТКА</text><text x="0" y="0" transform="translate(420.8,392.1) rotate(9)" font-size="6" fill="#c04040" fill-opacity="0.6" textLength="40.9" lengthAdjust="spacingAndGlyphs">ІНСПЕКТОРКА</text><text x="0" y="0" transform="translate(467.2,393.4) rotate(9)" font-size="7" fill="#3c6ab0" fill-opacity="0.45" textLength="43.4" lengthAdjust="spacingAndGlyphs">ДИРЕКТОРКА</text><text x="0" y="0" transform="translate(513.9,393.6) rotate(9)" font-size="7.5" fill="#507050" fill-opacity="0.3" textLength="32.5" lengthAdjust="spacingAndGlyphs">АВТОРКА</text><text x="0" y="0" transform="translate(83.8,402.5) rotate(-8)" font-size="5" fill="#507050" fill-opacity="0.45" textLength="27.9" lengthAdjust="spacingAndGlyphs">СТУДЕНТКА</text><text x="0" y="0" transform="translate(116.3,399.4) rotate(-8)" font-size="6" fill="#a03040" fill-opacity="0.6" textLength="37.2" lengthAdjust="spacingAndGlyphs">ДИРЕКТОРКА</text><text x="0" y="0" transform="translate(158.5,399.2) rotate(-8)" font-size="7.5" fill="#a03040" fill-opacity="0.45" font-weight="700" textLength="55.8" lengthAdjust="spacingAndGlyphs">НАТУРАЛІСТКА</text><text x="0" y="0" transform="translate(220.2,399.5) rotate(-8)" font-size="5" fill="#3a4a9a" fill-opacity="0.6" font-weight="700" textLength="27.9" lengthAdjust="spacingAndGlyphs">СТУДЕНТКА</text><text x="0" y="0" transform="translate(250.6,402.0) rotate(-8)" font-size="5" fill="#8a3a7a" fill-opacity="0.3" textLength="37.2" lengthAdjust="spacingAndGlyphs">НАТУРАЛІСТКА</text><text x="0" y="0" transform="translate(290.7,401.4) rotate(-8)" font-size="6" fill="#2a3a8a" fill-opacity="0.6" font-weight="700" textLength="26.0" lengthAdjust="spacingAndGlyphs">АВТОРКА</text><text x="0" y="0" transform="translate(320.5,400.1) rotate(-8)" font-size="5" fill="#b04050" fill-opacity="0.3" font-weight="700" textLength="31.0" lengthAdjust="spacingAndGlyphs">ДИЗАЙНЕРКА</text><text x="0" y="0" transform="translate(355.0,401.0) rotate(-8)" font-size="4.5" fill="#a03040" fill-opacity="0.45" textLength="25.1" lengthAdjust="spacingAndGlyphs">СТУДЕНТКА</text><text x="0" y="0" transform="translate(386.0,399.8) rotate(-8)" font-size="7.5" fill="#8a3a7a" fill-opacity="0.3" textLength="41.9" lengthAdjust="spacingAndGlyphs">СТУДЕНТКА</text><text x="0" y="0" transform="translate(433.7,399.7) rotate(-8)" font-size="4.5" fill="#a03040" fill-opacity="0.6" font-weight="700" textLength="27.9" lengthAdjust="spacingAndGlyphs">ФІГУРИСТКА</text><text x="0" y="0" transform="translate(465.3,400.6) rotate(-8)" font-size="6" fill="#5a5a6a" fill-opacity="0.3" textLength="37.2" lengthAdjust="spacingAndGlyphs">ФІГУРИСТКА</text><text x="0" y="0" transform="translate(506.4,401.6) rotate(-8)" font-size="7" fill="#60b060" fill-opacity="0.3" textLength="47.7" lengthAdjust="spacingAndGlyphs">ІНСПЕКТОРКА</text><text x="0" y="0" transform="translate(78.1,408.1) rotate(9)" font-size="7.5" fill="#3a4a9a" fill-opacity="0.3" textLength="41.9" lengthAdjust="spacingAndGlyphs">СТУДЕНТКА</text><text x="0" y="0" transform="translate(123.8,410.7) rotate(9)" font-size="6" fill="#b04050" fill-opacity="0.6" textLength="37.2" lengthAdjust="spacingAndGlyphs">ФІГУРИСТКА</text><text x="0" y="0" transform="translate(163.8,410.5) rotate(9)" font-size="7.5" fill="#d8c850" fill-opacity="0.6" textLength="41.9" lengthAdjust="spacingAndGlyphs">СТУДЕНТКА</text><text x="0" y="0" transform="translate(208.2,406.9) rotate(9)" font-size="4.5" fill="#3a4a9a" fill-opacity="0.3" font-weight="700" textLength="27.9" lengthAdjust="spacingAndGlyphs">ДИРЕКТОРКА</text><text x="0" y="0" transform="translate(239.8,408.7) rotate(9)" font-size="5.5" fill="#d8c850" fill-opacity="0.45" font-weight="700" textLength="23.9" lengthAdjust="spacingAndGlyphs">АВТОРКА</text><text x="0" y="0" transform="translate(268.6,407.6) rotate(9)" font-size="5.5" fill="#60b060" fill-opacity="0.6" font-weight="700" textLength="34.1" lengthAdjust="spacingAndGlyphs">ДИЗАЙНЕРКА</text><text x="0" y="0" transform="translate(307.6,409.8) rotate(9)" font-size="6" fill="#5a5a6a" fill-opacity="0.45" textLength="26.0" lengthAdjust="spacingAndGlyphs">АВТОРКА</text><text x="0" y="0" transform="translate(337.5,408.0) rotate(9)" font-size="4.5" fill="#b04050" fill-opacity="0.45" textLength="27.9" lengthAdjust="spacingAndGlyphs">ДИЗАЙНЕРКА</text><text x="0" y="0" transform="translate(371.2,408.3) rotate(9)" font-size="6" fill="#d8c850" fill-opacity="0.45" textLength="37.2" lengthAdjust="spacingAndGlyphs">ДИЗАЙНЕРКА</text><text x="0" y="0" transform="translate(410.7,409.0) rotate(9)" font-size="6" fill="#60b060" fill-opacity="0.3" textLength="44.6" lengthAdjust="spacingAndGlyphs">НАТУРАЛІСТКА</text><text x="0" y="0" transform="translate(458.7,408.5) rotate(9)" font-size="4.5" fill="#5a5a6a" fill-opacity="0.45" font-weight="700" textLength="33.5" lengthAdjust="spacingAndGlyphs">НАТУРАЛІСТКА</text><text x="0" y="0" transform="translate(494.3,410.1) rotate(9)" font-size="7.5" fill="#b04050" fill-opacity="0.45" textLength="32.5" lengthAdjust="spacingAndGlyphs">АВТОРКА</text><text x="0" y="0" transform="translate(529.6,407.9) rotate(9)" font-size="6.5" fill="#60b060" fill-opacity="0.3" font-weight="700" textLength="40.3" lengthAdjust="spacingAndGlyphs">ДИЗАЙНЕРКА</text><text x="0" y="0" transform="translate(74.3,417.7) rotate(-8)" font-size="6" fill="#a03040" fill-opacity="0.6" font-weight="700" textLength="37.2" lengthAdjust="spacingAndGlyphs">ФІГУРИСТКА</text><text x="0" y="0" transform="translate(117.3,415.2) rotate(-8)" font-size="4.5" fill="#3a4a9a" fill-opacity="0.45" font-weight="700" textLength="27.9" lengthAdjust="spacingAndGlyphs">ДИЗАЙНЕРКА</text><text x="0" y="0" transform="translate(151.0,418.0) rotate(-8)" font-size="6" fill="#d8c850" fill-opacity="0.45" textLength="37.2" lengthAdjust="spacingAndGlyphs">ДИРЕКТОРКА</text><text x="0" y="0" transform="translate(191.0,415.7) rotate(-8)" font-size="5.5" fill="#c04040" fill-opacity="0.45" textLength="34.1" lengthAdjust="spacingAndGlyphs">ФІГУРИСТКА</text><text x="0" y="0" transform="translate(228.5,417.8) rotate(-8)" font-size="6" fill="#d8c850" fill-opacity="0.45" textLength="37.2" lengthAdjust="spacingAndGlyphs">ДИЗАЙНЕРКА</text><text x="0" y="0" transform="translate(268.0,417.0) rotate(-8)" font-size="7.5" fill="#8a3a7a" fill-opacity="0.45" textLength="32.5" lengthAdjust="spacingAndGlyphs">АВТОРКА</text><text x="0" y="0" transform="translate(306.1,415.1) rotate(-8)" font-size="6" fill="#c04040" fill-opacity="0.45" textLength="37.2" lengthAdjust="spacingAndGlyphs">ДИЗАЙНЕРКА</text><text x="0" y="0" transform="translate(347.2,415.3) rotate(-8)" font-size="5.5" fill="#3a4a9a" fill-opacity="0.6" textLength="40.9" lengthAdjust="spacingAndGlyphs">НАТУРАЛІСТКА</text><text x="0" y="0" transform="translate(393.7,416.0) rotate(-8)" font-size="5" fill="#507050" fill-opacity="0.45" font-weight="700" textLength="27.9" lengthAdjust="spacingAndGlyphs">СТУДЕНТКА</text><text x="0" y="0" transform="translate(425.1,415.8) rotate(-8)" font-size="6" fill="#707080" fill-opacity="0.3" textLength="37.2" lengthAdjust="spacingAndGlyphs">ФІГУРИСТКА</text><text x="0" y="0" transform="translate(464.9,416.4) rotate(-8)" font-size="6.5" fill="#b04050" fill-opacity="0.6" textLength="36.3" lengthAdjust="spacingAndGlyphs">СТУДЕНТКА</text><text x="0" y="0" transform="translate(505.3,415.2) rotate(-8)" font-size="7.5" fill="#a03040" fill-opacity="0.3" textLength="46.5" lengthAdjust="spacingAndGlyphs">ДИЗАЙНЕРКА</text><text x="0" y="0" transform="translate(68.8,423.3) rotate(9)" font-size="6" fill="#b04050" fill-opacity="0.6" font-weight="700" textLength="37.2" lengthAdjust="spacingAndGlyphs">ФІГУРИСТКА</text><text x="0" y="0" transform="translate(108.8,426.6) rotate(9)" font-size="6.5" fill="#8a3a7a" fill-opacity="0.6" textLength="40.3" lengthAdjust="spacingAndGlyphs">ДИЗАЙНЕРКА</text><text x="0" y="0" transform="translate(152.1,425.5) rotate(9)" font-size="5" fill="#5a5a6a" fill-opacity="0.45" font-weight="700" textLength="21.7" lengthAdjust="spacingAndGlyphs">АВТОРКА</text><text x="0" y="0" transform="translate(176.7,423.3) rotate(9)" font-size="6.5" fill="#2a3a8a" fill-opacity="0.3" textLength="44.3" lengthAdjust="spacingAndGlyphs">ІНСПЕКТОРКА</text><text x="0" y="0" transform="translate(225.4,424.8) rotate(9)" font-size="4.5" fill="#60b060" fill-opacity="0.3" textLength="25.1" lengthAdjust="spacingAndGlyphs">СТУДЕНТКА</text><text x="0" y="0" transform="translate(255.0,426.3) rotate(9)" font-size="6" fill="#a03040" fill-opacity="0.45" font-weight="700" textLength="37.2" lengthAdjust="spacingAndGlyphs">ДИЗАЙНЕРКА</text><text x="0" y="0" transform="translate(294.5,425.3) rotate(9)" font-size="7" fill="#5a5a6a" fill-opacity="0.6" font-weight="700" textLength="43.4" lengthAdjust="spacingAndGlyphs">ДИЗАЙНЕРКА</text><text x="0" y="0" transform="translate(340.2,424.2) rotate(9)" font-size="7" fill="#3c6ab0" fill-opacity="0.6" textLength="43.4" lengthAdjust="spacingAndGlyphs">РЕДАКТОРКА</text><text x="0" y="0" transform="translate(386.9,425.4) rotate(9)" font-size="6" fill="#3c6ab0" fill-opacity="0.45" textLength="26.0" lengthAdjust="spacingAndGlyphs">АВТОРКА</text><text x="0" y="0" transform="translate(416.6,426.0) rotate(9)" font-size="6" fill="#d8c850" fill-opacity="0.3" textLength="40.9" lengthAdjust="spacingAndGlyphs">ІНСПЕКТОРКА</text><text x="0" y="0" transform="translate(461.2,426.4) rotate(9)" font-size="7" fill="#b04050" fill-opacity="0.6" textLength="43.4" lengthAdjust="spacingAndGlyphs">РЕДАКТОРКА</text><text x="0" y="0" transform="translate(510.2,423.2) rotate(9)" font-size="5.5" fill="#2a3a8a" fill-opacity="0.3" font-weight="700" textLength="40.9" lengthAdjust="spacingAndGlyphs">НАТУРАЛІСТКА</text><text x="0" y="0" transform="translate(69.8,432.8) rotate(-8)" font-size="5.5" fill="#2a3a8a" fill-opacity="0.6" textLength="37.5" lengthAdjust="spacingAndGlyphs">ІНСПЕКТОРКА</text><text x="0" y="0" transform="translate(110.0,433.4) rotate(-8)" font-size="5" fill="#d8c850" fill-opacity="0.45" textLength="31.0" lengthAdjust="spacingAndGlyphs">ДИЗАЙНЕРКА</text><text x="0" y="0" transform="translate(143.5,431.6) rotate(-8)" font-size="7.5" fill="#60b060" fill-opacity="0.45" font-weight="700" textLength="32.5" lengthAdjust="spacingAndGlyphs">АВТОРКА</text><text x="0" y="0" transform="translate(178.4,433.1) rotate(-8)" font-size="6" fill="#c04040" fill-opacity="0.45" textLength="37.2" lengthAdjust="spacingAndGlyphs">РЕДАКТОРКА</text><text x="0" y="0" transform="translate(218.3,435.2) rotate(-8)" font-size="4.5" fill="#d8c850" fill-opacity="0.45" textLength="25.1" lengthAdjust="spacingAndGlyphs">СТУДЕНТКА</text><text x="0" y="0" transform="translate(246.9,434.7) rotate(-8)" font-size="6" fill="#3c6ab0" fill-opacity="0.3" textLength="37.2" lengthAdjust="spacingAndGlyphs">РЕДАКТОРКА</text><text x="0" y="0" transform="translate(289.6,433.0) rotate(-8)" font-size="6.5" fill="#b04050" fill-opacity="0.6" textLength="28.2" lengthAdjust="spacingAndGlyphs">АВТОРКА</text><text x="0" y="0" transform="translate(323.2,433.8) rotate(-8)" font-size="7" fill="#507050" fill-opacity="0.45" textLength="43.4" lengthAdjust="spacingAndGlyphs">ФІГУРИСТКА</text><text x="0" y="0" transform="translate(371.2,431.5) rotate(-8)" font-size="7.5" fill="#2a3a8a" fill-opacity="0.45" font-weight="700" textLength="55.8" lengthAdjust="spacingAndGlyphs">НАТУРАЛІСТКА</text><text x="0" y="0" transform="translate(430.9,434.7) rotate(-8)" font-size="7.5" fill="#2a3a8a" fill-opacity="0.3" textLength="55.8" lengthAdjust="spacingAndGlyphs">НАТУРАЛІСТКА</text><text x="0" y="0" transform="translate(489.0,431.8) rotate(-8)" font-size="7" fill="#60b060" fill-opacity="0.6" textLength="47.7" lengthAdjust="spacingAndGlyphs">ІНСПЕКТОРКА</text><text x="0" y="0" transform="translate(80.7,440.1) rotate(9)" font-size="6.5" fill="#3c6ab0" fill-opacity="0.6" textLength="40.3" lengthAdjust="spacingAndGlyphs">ДИЗАЙНЕРКА</text><text x="0" y="0" transform="translate(126.6,442.0) rotate(9)" font-size="4.5" fill="#b04050" fill-opacity="0.6" font-weight="700" textLength="27.9" lengthAdjust="spacingAndGlyphs">РЕДАКТОРКА</text><text x="0" y="0" transform="translate(159.8,439.2) rotate(9)" font-size="5.5" fill="#707080" fill-opacity="0.6" textLength="30.7" lengthAdjust="spacingAndGlyphs">СТУДЕНТКА</text><text x="0" y="0" transform="translate(195.6,440.5) rotate(9)" font-size="5" fill="#60b060" fill-opacity="0.3" textLength="27.9" lengthAdjust="spacingAndGlyphs">СТУДЕНТКА</text><text x="0" y="0" transform="translate(226.8,439.0) rotate(9)" font-size="7.5" fill="#2a3a8a" fill-opacity="0.3" textLength="46.5" lengthAdjust="spacingAndGlyphs">ФІГУРИСТКА</text><text x="0" y="0" transform="translate(277.7,438.2) rotate(9)" font-size="6.5" fill="#60b060" fill-opacity="0.45" textLength="36.3" lengthAdjust="spacingAndGlyphs">СТУДЕНТКА</text><text x="0" y="0" transform="translate(316.6,438.7) rotate(9)" font-size="6.5" fill="#d8c850" fill-opacity="0.3" textLength="40.3" lengthAdjust="spacingAndGlyphs">ФІГУРИСТКА</text><text x="0" y="0" transform="translate(362.0,440.2) rotate(9)" font-size="6.5" fill="#707080" fill-opacity="0.6" font-weight="700" textLength="28.2" lengthAdjust="spacingAndGlyphs">АВТОРКА</text><text x="0" y="0" transform="translate(395.7,440.5) rotate(9)" font-size="6" fill="#8a3a7a" fill-opacity="0.6" textLength="37.2" lengthAdjust="spacingAndGlyphs">ДИЗАЙНЕРКА</text><text x="0" y="0" transform="translate(438.1,440.3) rotate(9)" font-size="7" fill="#60b060" fill-opacity="0.45" textLength="43.4" lengthAdjust="spacingAndGlyphs">ФІГУРИСТКА</text><text x="0" y="0" transform="translate(486.6,440.5) rotate(9)" font-size="6" fill="#2a3a8a" fill-opacity="0.45" textLength="44.6" lengthAdjust="spacingAndGlyphs">НАТУРАЛІСТКА</text><text x="0" y="0" transform="translate(536.5,441.9) rotate(9)" font-size="6" fill="#5a5a6a" fill-opacity="0.6" font-weight="700" textLength="37.2" lengthAdjust="spacingAndGlyphs">ФІГУРИСТКА</text><text x="0" y="0" transform="translate(82.9,448.4) rotate(-8)" font-size="5.5" fill="#507050" fill-opacity="0.45" textLength="30.7" lengthAdjust="spacingAndGlyphs">СТУДЕНТКА</text><text x="0" y="0" transform="translate(117.7,446.9) rotate(-8)" font-size="5.5" fill="#707080" fill-opacity="0.3" font-weight="700" textLength="23.9" lengthAdjust="spacingAndGlyphs">АВТОРКА</text><text x="0" y="0" transform="translate(143.6,446.4) rotate(-8)" font-size="6.5" fill="#507050" fill-opacity="0.6" textLength="28.2" lengthAdjust="spacingAndGlyphs">АВТОРКА</text><text x="0" y="0" transform="translate(174.7,447.4) rotate(-8)" font-size="5.5" fill="#3a4a9a" fill-opacity="0.3" textLength="34.1" lengthAdjust="spacingAndGlyphs">ФІГУРИСТКА</text><text x="0" y="0" transform="translate(211.4,446.4) rotate(-8)" font-size="5.5" fill="#707080" fill-opacity="0.3" font-weight="700" textLength="30.7" lengthAdjust="spacingAndGlyphs">СТУДЕНТКА</text><text x="0" y="0" transform="translate(247.6,449.9) rotate(-8)" font-size="7" fill="#507050" fill-opacity="0.6" textLength="43.4" lengthAdjust="spacingAndGlyphs">ФІГУРИСТКА</text><text x="0" y="0" transform="translate(296.2,449.7) rotate(-8)" font-size="7.5" fill="#c04040" fill-opacity="0.45" font-weight="700" textLength="51.1" lengthAdjust="spacingAndGlyphs">ІНСПЕКТОРКА</text><text x="0" y="0" transform="translate(350.4,448.1) rotate(-8)" font-size="4.5" fill="#a03040" fill-opacity="0.3" textLength="19.5" lengthAdjust="spacingAndGlyphs">АВТОРКА</text><text x="0" y="0" transform="translate(372.9,448.4) rotate(-8)" font-size="5" fill="#a03040" fill-opacity="0.3" font-weight="700" textLength="21.7" lengthAdjust="spacingAndGlyphs">АВТОРКА</text><text x="0" y="0" transform="translate(397.1,446.7) rotate(-8)" font-size="7" fill="#c04040" fill-opacity="0.3" textLength="39.1" lengthAdjust="spacingAndGlyphs">СТУДЕНТКА</text><text x="0" y="0" transform="translate(439.4,448.1) rotate(-8)" font-size="7.5" fill="#3c6ab0" fill-opacity="0.45" textLength="32.5" lengthAdjust="spacingAndGlyphs">АВТОРКА</text><text x="0" y="0" transform="translate(476.9,448.6) rotate(-8)" font-size="5" fill="#3c6ab0" fill-opacity="0.3" textLength="37.2" lengthAdjust="spacingAndGlyphs">НАТУРАЛІСТКА</text><text x="0" y="0" transform="translate(520.1,446.1) rotate(-8)" font-size="6" fill="#5a5a6a" fill-opacity="0.6" textLength="37.2" lengthAdjust="spacingAndGlyphs">ФІГУРИСТКА</text><text x="0" y="0" transform="translate(73.3,456.6) rotate(9)" font-size="6" fill="#5a5a6a" fill-opacity="0.6" textLength="26.0" lengthAdjust="spacingAndGlyphs">АВТОРКА</text><text x="0" y="0" transform="translate(104.5,458.1) rotate(9)" font-size="6" fill="#5a5a6a" fill-opacity="0.3" textLength="37.2" lengthAdjust="spacingAndGlyphs">ФІГУРИСТКА</text><text x="0" y="0" transform="translate(147.2,458.0) rotate(9)" font-size="5.5" fill="#507050" fill-opacity="0.3" font-weight="700" textLength="23.9" lengthAdjust="spacingAndGlyphs">АВТОРКА</text><text x="0" y="0" transform="translate(176.8,455.7) rotate(9)" font-size="6" fill="#d8c850" fill-opacity="0.45" textLength="40.9" lengthAdjust="spacingAndGlyphs">ІНСПЕКТОРКА</text><text x="0" y="0" transform="translate(223.4,457.2) rotate(9)" font-size="7.5" fill="#8a3a7a" fill-opacity="0.45" textLength="55.8" lengthAdjust="spacingAndGlyphs">НАТУРАЛІСТКА</text><text x="0" y="0" transform="translate(285.0,455.9) rotate(9)" font-size="6" fill="#3a4a9a" fill-opacity="0.3" font-weight="700" textLength="33.5" lengthAdjust="spacingAndGlyphs">СТУДЕНТКА</text><text x="0" y="0" transform="translate(322.7,454.5) rotate(9)" font-size="5.5" fill="#a03040" fill-opacity="0.6" textLength="34.1" lengthAdjust="spacingAndGlyphs">РЕДАКТОРКА</text><text x="0" y="0" transform="translate(362.6,454.5) rotate(9)" font-size="5.5" fill="#3c6ab0" fill-opacity="0.3" textLength="37.5" lengthAdjust="spacingAndGlyphs">ІНСПЕКТОРКА</text><text x="0" y="0" transform="translate(404.8,454.6) rotate(9)" font-size="5" fill="#3c6ab0" fill-opacity="0.45" font-weight="700" textLength="21.7" lengthAdjust="spacingAndGlyphs">АВТОРКА</text><text x="0" y="0" transform="translate(429.3,455.4) rotate(9)" font-size="7" fill="#b04050" fill-opacity="0.3" textLength="43.4" lengthAdjust="spacingAndGlyphs">ДИЗАЙНЕРКА</text><text x="0" y="0" transform="translate(474.9,454.8) rotate(9)" font-size="6" fill="#707080" fill-opacity="0.6" textLength="37.2" lengthAdjust="spacingAndGlyphs">ДИЗАЙНЕРКА</text><text x="0" y="0" transform="translate(514.9,455.4) rotate(9)" font-size="6.5" fill="#d8c850" fill-opacity="0.45" textLength="44.3" lengthAdjust="spacingAndGlyphs">ІНСПЕКТОРКА</text><text x="0" y="0" transform="translate(83.2,463.4) rotate(-8)" font-size="7.5" fill="#507050" fill-opacity="0.45" textLength="51.1" lengthAdjust="spacingAndGlyphs">ІНСПЕКТОРКА</text><text x="0" y="0" transform="translate(136.5,463.8) rotate(-8)" font-size="6.5" fill="#707080" fill-opacity="0.6" font-weight="700" textLength="40.3" lengthAdjust="spacingAndGlyphs">ДИЗАЙНЕРКА</text><text x="0" y="0" transform="translate(179.6,462.7) rotate(-8)" font-size="6" fill="#2a3a8a" fill-opacity="0.3" font-weight="700" textLength="37.2" lengthAdjust="spacingAndGlyphs">ДИЗАЙНЕРКА</text><text x="0" y="0" transform="translate(220.0,462.9) rotate(-8)" font-size="4.5" fill="#60b060" fill-opacity="0.6" textLength="19.5" lengthAdjust="spacingAndGlyphs">АВТОРКА</text><text x="0" y="0" transform="translate(244.7,462.4) rotate(-8)" font-size="7.5" fill="#c04040" fill-opacity="0.45" font-weight="700" textLength="46.5" lengthAdjust="spacingAndGlyphs">РЕДАКТОРКА</text><text x="0" y="0" transform="translate(295.5,464.7) rotate(-8)" font-size="6" fill="#3a4a9a" fill-opacity="0.45" textLength="37.2" lengthAdjust="spacingAndGlyphs">РЕДАКТОРКА</text><text x="0" y="0" transform="translate(335.4,463.2) rotate(-8)" font-size="7.5" fill="#3c6ab0" fill-opacity="0.6" textLength="46.5" lengthAdjust="spacingAndGlyphs">ДИЗАЙНЕРКА</text><text x="0" y="0" transform="translate(385.2,464.5) rotate(-8)" font-size="7" fill="#d8c850" fill-opacity="0.3" font-weight="700" textLength="43.4" lengthAdjust="spacingAndGlyphs">ДИЗАЙНЕРКА</text><text x="0" y="0" transform="translate(432.3,462.2) rotate(-8)" font-size="6.5" fill="#3a4a9a" fill-opacity="0.6" textLength="28.2" lengthAdjust="spacingAndGlyphs">АВТОРКА</text><text x="0" y="0" transform="translate(464.5,461.5) rotate(-8)" font-size="6" fill="#707080" fill-opacity="0.6" font-weight="700" textLength="37.2" lengthAdjust="spacingAndGlyphs">ДИРЕКТОРКА</text><text x="0" y="0" transform="translate(506.7,462.3) rotate(-8)" font-size="6.5" fill="#c04040" fill-opacity="0.45" textLength="28.2" lengthAdjust="spacingAndGlyphs">АВТОРКА</text><text x="0" y="0" transform="translate(539.6,462.7) rotate(-8)" font-size="5.5" fill="#707080" fill-opacity="0.6" textLength="37.5" lengthAdjust="spacingAndGlyphs">ІНСПЕКТОРКА</text><text x="0" y="0" transform="translate(80.9,469.3) rotate(9)" font-size="6" fill="#507050" fill-opacity="0.6" font-weight="700" textLength="33.5" lengthAdjust="spacingAndGlyphs">СТУДЕНТКА</text><text x="0" y="0" transform="translate(117.0,469.4) rotate(9)" font-size="6" fill="#3c6ab0" fill-opacity="0.45" font-weight="700" textLength="37.2" lengthAdjust="spacingAndGlyphs">РЕДАКТОРКА</text><text x="0" y="0" transform="translate(156.8,472.0) rotate(9)" font-size="6" fill="#507050" fill-opacity="0.3" font-weight="700" textLength="40.9" lengthAdjust="spacingAndGlyphs">ІНСПЕКТОРКА</text><text x="0" y="0" transform="translate(200.4,468.7) rotate(9)" font-size="6" fill="#d8c850" fill-opacity="0.45" textLength="37.2" lengthAdjust="spacingAndGlyphs">ДИЗАЙНЕРКА</text><text x="0" y="0" transform="translate(242.5,468.6) rotate(9)" font-size="6" fill="#3a4a9a" fill-opacity="0.45" textLength="37.2" lengthAdjust="spacingAndGlyphs">ДИРЕКТОРКА</text><text x="0" y="0" transform="translate(282.5,468.2) rotate(9)" font-size="7.5" fill="#a03040" fill-opacity="0.6" textLength="46.5" lengthAdjust="spacingAndGlyphs">ДИРЕКТОРКА</text><text x="0" y="0" transform="translate(331.9,468.7) rotate(9)" font-size="7.5" fill="#a03040" fill-opacity="0.6" font-weight="700" textLength="46.5" lengthAdjust="spacingAndGlyphs">ФІГУРИСТКА</text><text x="0" y="0" transform="translate(382.0,470.4) rotate(9)" font-size="7" fill="#3c6ab0" fill-opacity="0.6" font-weight="700" textLength="39.1" lengthAdjust="spacingAndGlyphs">СТУДЕНТКА</text><text x="0" y="0" transform="translate(424.8,468.9) rotate(9)" font-size="6" fill="#5a5a6a" fill-opacity="0.45" textLength="33.5" lengthAdjust="spacingAndGlyphs">СТУДЕНТКА</text><text x="0" y="0" transform="translate(462.0,469.1) rotate(9)" font-size="5" fill="#d8c850" fill-opacity="0.6" textLength="31.0" lengthAdjust="spacingAndGlyphs">ФІГУРИСТКА</text><text x="0" y="0" transform="translate(497.8,470.1) rotate(9)" font-size="6" fill="#d8c850" fill-opacity="0.6" textLength="37.2" lengthAdjust="spacingAndGlyphs">РЕДАКТОРКА</text><text x="0" y="0" transform="translate(81.2,477.2) rotate(-8)" font-size="6.5" fill="#a03040" fill-opacity="0.3" textLength="40.3" lengthAdjust="spacingAndGlyphs">РЕДАКТОРКА</text><text x="0" y="0" transform="translate(123.7,478.8) rotate(-8)" font-size="5.5" fill="#3c6ab0" fill-opacity="0.6" textLength="30.7" lengthAdjust="spacingAndGlyphs">СТУДЕНТКА</text><text x="0" y="0" transform="translate(157.8,477.6) rotate(-8)" font-size="6" fill="#3c6ab0" fill-opacity="0.6" textLength="44.6" lengthAdjust="spacingAndGlyphs">НАТУРАЛІСТКА</text><text x="0" y="0" transform="translate(207.6,478.6) rotate(-8)" font-size="6.5" fill="#d8c850" fill-opacity="0.3" textLength="44.3" lengthAdjust="spacingAndGlyphs">ІНСПЕКТОРКА</text><text x="0" y="0" transform="translate(257.9,478.7) rotate(-8)" font-size="7" fill="#8a3a7a" fill-opacity="0.6" textLength="43.4" lengthAdjust="spacingAndGlyphs">РЕДАКТОРКА</text><text x="0" y="0" transform="translate(307.2,476.8) rotate(-8)" font-size="4.5" fill="#507050" fill-opacity="0.3" textLength="30.7" lengthAdjust="spacingAndGlyphs">ІНСПЕКТОРКА</text><text x="0" y="0" transform="translate(339.9,478.5) rotate(-8)" font-size="7" fill="#5a5a6a" fill-opacity="0.6" textLength="43.4" lengthAdjust="spacingAndGlyphs">ДИРЕКТОРКА</text><text x="0" y="0" transform="translate(386.4,477.3) rotate(-8)" font-size="6" fill="#3c6ab0" fill-opacity="0.3" font-weight="700" textLength="33.5" lengthAdjust="spacingAndGlyphs">СТУДЕНТКА</text><text x="0" y="0" transform="translate(425.9,476.3) rotate(-8)" font-size="7.5" fill="#3a4a9a" fill-opacity="0.6" textLength="46.5" lengthAdjust="spacingAndGlyphs">ДИРЕКТОРКА</text><text x="0" y="0" transform="translate(475.1,478.3) rotate(-8)" font-size="5.5" fill="#60b060" fill-opacity="0.45" textLength="30.7" lengthAdjust="spacingAndGlyphs">СТУДЕНТКА</text><text x="0" y="0" transform="translate(511.8,478.8) rotate(-8)" font-size="7.5" fill="#60b060" fill-opacity="0.45" textLength="46.5" lengthAdjust="spacingAndGlyphs">РЕДАКТОРКА</text><text x="0" y="0" transform="translate(87.7,486.8) rotate(9)" font-size="7.5" fill="#a03040" fill-opacity="0.45" textLength="46.5" lengthAdjust="spacingAndGlyphs">РЕДАКТОРКА</text><text x="0" y="0" transform="translate(137.1,485.5) rotate(9)" font-size="6.5" fill="#707080" fill-opacity="0.6" font-weight="700" textLength="40.3" lengthAdjust="spacingAndGlyphs">ФІГУРИСТКА</text><text x="0" y="0" transform="translate(179.8,487.0) rotate(9)" font-size="5.5" fill="#507050" fill-opacity="0.3" textLength="37.5" lengthAdjust="spacingAndGlyphs">ІНСПЕКТОРКА</text><text x="0" y="0" transform="translate(222.6,486.9) rotate(9)" font-size="5.5" fill="#8a3a7a" fill-opacity="0.6" font-weight="700" textLength="37.5" lengthAdjust="spacingAndGlyphs">ІНСПЕКТОРКА</text><text x="0" y="0" transform="translate(262.2,486.2) rotate(9)" font-size="6" fill="#b04050" fill-opacity="0.6" textLength="26.0" lengthAdjust="spacingAndGlyphs">АВТОРКА</text><text x="0" y="0" transform="translate(290.6,486.6) rotate(9)" font-size="6" fill="#2a3a8a" fill-opacity="0.3" textLength="37.2" lengthAdjust="spacingAndGlyphs">РЕДАКТОРКА</text><text x="0" y="0" transform="translate(330.7,487.1) rotate(9)" font-size="5.5" fill="#c04040" fill-opacity="0.3" font-weight="700" textLength="34.1" lengthAdjust="spacingAndGlyphs">ДИРЕКТОРКА</text><text x="0" y="0" transform="translate(369.4,486.3) rotate(9)" font-size="6" fill="#707080" fill-opacity="0.3" font-weight="700" textLength="37.2" lengthAdjust="spacingAndGlyphs">ФІГУРИСТКА</text><text x="0" y="0" transform="translate(411.6,484.0) rotate(9)" font-size="5" fill="#8a3a7a" fill-opacity="0.3" textLength="37.2" lengthAdjust="spacingAndGlyphs">НАТУРАЛІСТКА</text><text x="0" y="0" transform="translate(454.1,483.8) rotate(9)" font-size="7.5" fill="#8a3a7a" fill-opacity="0.3" textLength="55.8" lengthAdjust="spacingAndGlyphs">НАТУРАЛІСТКА</text><text x="0" y="0" transform="translate(514.7,485.7) rotate(9)" font-size="7.5" fill="#2a3a8a" fill-opacity="0.3" font-weight="700" textLength="41.9" lengthAdjust="spacingAndGlyphs">СТУДЕНТКА</text><text x="0" y="0" transform="translate(81.9,492.2) rotate(-8)" font-size="6" fill="#707080" fill-opacity="0.6" textLength="44.6" lengthAdjust="spacingAndGlyphs">НАТУРАЛІСТКА</text><text x="0" y="0" transform="translate(128.9,493.1) rotate(-8)" font-size="4.5" fill="#a03040" fill-opacity="0.6" font-weight="700" textLength="30.7" lengthAdjust="spacingAndGlyphs">ІНСПЕКТОРКА</text><text x="0" y="0" transform="translate(165.3,492.6) rotate(-8)" font-size="5" fill="#8a3a7a" fill-opacity="0.3" textLength="34.1" lengthAdjust="spacingAndGlyphs">ІНСПЕКТОРКА</text><text x="0" y="0" transform="translate(202.2,491.1) rotate(-8)" font-size="5.5" fill="#60b060" fill-opacity="0.45" font-weight="700" textLength="34.1" lengthAdjust="spacingAndGlyphs">ДИРЕКТОРКА</text><text x="0" y="0" transform="translate(239.7,492.1) rotate(-8)" font-size="6" fill="#d8c850" fill-opacity="0.6" textLength="33.5" lengthAdjust="spacingAndGlyphs">СТУДЕНТКА</text><text x="0" y="0" transform="translate(275.4,494.0) rotate(-8)" font-size="6" fill="#60b060" fill-opacity="0.45" textLength="37.2" lengthAdjust="spacingAndGlyphs">ФІГУРИСТКА</text><text x="0" y="0" transform="translate(316.6,493.3) rotate(-8)" font-size="6.5" fill="#3a4a9a" fill-opacity="0.45" textLength="40.3" lengthAdjust="spacingAndGlyphs">ФІГУРИСТКА</text><text x="0" y="0" transform="translate(359.7,494.6) rotate(-8)" font-size="5.5" fill="#c04040" fill-opacity="0.3" textLength="34.1" lengthAdjust="spacingAndGlyphs">ФІГУРИСТКА</text><text x="0" y="0" transform="translate(397.4,491.9) rotate(-8)" font-size="4.5" fill="#d8c850" fill-opacity="0.3" textLength="27.9" lengthAdjust="spacingAndGlyphs">ДИРЕКТОРКА</text><text x="0" y="0" transform="translate(428.0,494.3) rotate(-8)" font-size="4.5" fill="#8a3a7a" fill-opacity="0.45" font-weight="700" textLength="33.5" lengthAdjust="spacingAndGlyphs">НАТУРАЛІСТКА</text><text x="0" y="0" transform="translate(466.0,493.4) rotate(-8)" font-size="6" fill="#a03040" fill-opacity="0.6" textLength="37.2" lengthAdjust="spacingAndGlyphs">ДИЗАЙНЕРКА</text><text x="0" y="0" transform="translate(508.2,492.4) rotate(-8)" font-size="5.5" fill="#a03040" fill-opacity="0.6" textLength="34.1" lengthAdjust="spacingAndGlyphs">ДИЗАЙНЕРКА</text><text x="0" y="0" transform="translate(70.8,499.7) rotate(9)" font-size="6" fill="#507050" fill-opacity="0.45" textLength="37.2" lengthAdjust="spacingAndGlyphs">ФІГУРИСТКА</text><text x="0" y="0" transform="translate(110.1,501.0) rotate(9)" font-size="7.5" fill="#c04040" fill-opacity="0.45" textLength="32.5" lengthAdjust="spacingAndGlyphs">АВТОРКА</text><text x="0" y="0" transform="translate(146.9,499.0) rotate(9)" font-size="7.5" fill="#b04050" fill-opacity="0.6" textLength="46.5" lengthAdjust="spacingAndGlyphs">ДИРЕКТОРКА</text><text x="0" y="0" transform="translate(197.8,501.1) rotate(9)" font-size="7.5" fill="#d8c850" fill-opacity="0.6" textLength="46.5" lengthAdjust="spacingAndGlyphs">РЕДАКТОРКА</text><text x="0" y="0" transform="translate(248.2,498.9) rotate(9)" font-size="4.5" fill="#d8c850" fill-opacity="0.6" font-weight="700" textLength="27.9" lengthAdjust="spacingAndGlyphs">РЕДАКТОРКА</text><text x="0" y="0" transform="translate(278.6,499.4) rotate(9)" font-size="6" fill="#b04050" fill-opacity="0.45" textLength="37.2" lengthAdjust="spacingAndGlyphs">ДИЗАЙНЕРКА</text><text x="0" y="0" transform="translate(320.6,501.9) rotate(9)" font-size="7.5" fill="#3c6ab0" fill-opacity="0.45" textLength="41.9" lengthAdjust="spacingAndGlyphs">СТУДЕНТКА</text><text x="0" y="0" transform="translate(367.6,501.4) rotate(9)" font-size="5" fill="#507050" fill-opacity="0.45" font-weight="700" textLength="31.0" lengthAdjust="spacingAndGlyphs">РЕДАКТОРКА</text><text x="0" y="0" transform="translate(402.4,499.1) rotate(9)" font-size="4.5" fill="#3c6ab0" fill-opacity="0.3" textLength="27.9" lengthAdjust="spacingAndGlyphs">ФІГУРИСТКА</text><text x="0" y="0" transform="translate(435.8,500.2) rotate(9)" font-size="7" fill="#507050" fill-opacity="0.3" font-weight="700" textLength="43.4" lengthAdjust="spacingAndGlyphs">ДИЗАЙНЕРКА</text><text x="0" y="0" transform="translate(485.1,500.4) rotate(9)" font-size="4.5" fill="#60b060" fill-opacity="0.6" font-weight="700" textLength="33.5" lengthAdjust="spacingAndGlyphs">НАТУРАЛІСТКА</text><text x="0" y="0" transform="translate(522.3,500.4) rotate(9)" font-size="5.5" fill="#b04050" fill-opacity="0.3" font-weight="700" textLength="34.1" lengthAdjust="spacingAndGlyphs">РЕДАКТОРКА</text><text x="0" y="0" transform="translate(75.7,507.6) rotate(-8)" font-size="6" fill="#c04040" fill-opacity="0.3" textLength="44.6" lengthAdjust="spacingAndGlyphs">НАТУРАЛІСТКА</text><text x="0" y="0" transform="translate(124.8,508.7) rotate(-8)" font-size="4.5" fill="#2a3a8a" fill-opacity="0.6" textLength="30.7" lengthAdjust="spacingAndGlyphs">ІНСПЕКТОРКА</text><text x="0" y="0" transform="translate(159.2,509.0) rotate(-8)" font-size="7" fill="#d8c850" fill-opacity="0.3" font-weight="700" textLength="39.1" lengthAdjust="spacingAndGlyphs">СТУДЕНТКА</text><text x="0" y="0" transform="translate(203.5,507.3) rotate(-8)" font-size="4.5" fill="#60b060" fill-opacity="0.3" textLength="27.9" lengthAdjust="spacingAndGlyphs">ФІГУРИСТКА</text><text x="0" y="0" transform="translate(235.8,509.5) rotate(-8)" font-size="6" fill="#2a3a8a" fill-opacity="0.3" font-weight="700" textLength="26.0" lengthAdjust="spacingAndGlyphs">АВТОРКА</text><text x="0" y="0" transform="translate(264.9,506.6) rotate(-8)" font-size="6.5" fill="#8a3a7a" fill-opacity="0.45" font-weight="700" textLength="48.4" lengthAdjust="spacingAndGlyphs">НАТУРАЛІСТКА</text><text x="0" y="0" transform="translate(318.5,508.7) rotate(-8)" font-size="6" fill="#507050" fill-opacity="0.45" font-weight="700" textLength="33.5" lengthAdjust="spacingAndGlyphs">СТУДЕНТКА</text><text x="0" y="0" transform="translate(355.8,509.3) rotate(-8)" font-size="6" fill="#c04040" fill-opacity="0.45" textLength="33.5" lengthAdjust="spacingAndGlyphs">СТУДЕНТКА</text><text x="0" y="0" transform="translate(393.5,507.9) rotate(-8)" font-size="5" fill="#3a4a9a" fill-opacity="0.45" font-weight="700" textLength="34.1" lengthAdjust="spacingAndGlyphs">ІНСПЕКТОРКА</text><text x="0" y="0" transform="translate(433.1,508.6) rotate(-8)" font-size="7.5" fill="#8a3a7a" fill-opacity="0.3" textLength="51.1" lengthAdjust="spacingAndGlyphs">ІНСПЕКТОРКА</text><text x="0" y="0" transform="translate(487.0,508.6) rotate(-8)" font-size="6" fill="#60b060" fill-opacity="0.45" textLength="37.2" lengthAdjust="spacingAndGlyphs">РЕДАКТОРКА</text><text x="0" y="0" transform="translate(529.3,510.0) rotate(-8)" font-size="6" fill="#a03040" fill-opacity="0.45" textLength="37.2" lengthAdjust="spacingAndGlyphs">РЕДАКТОРКА</text><text x="0" y="0" transform="translate(77.3,515.9) rotate(9)" font-size="5.5" fill="#60b060" fill-opacity="0.45" textLength="34.1" lengthAdjust="spacingAndGlyphs">ДИЗАЙНЕРКА</text><text x="0" y="0" transform="translate(115.4,514.3) rotate(9)" font-size="5" fill="#a03040" fill-opacity="0.45" font-weight="700" textLength="21.7" lengthAdjust="spacingAndGlyphs">АВТОРКА</text><text x="0" y="0" transform="translate(141.5,515.2) rotate(9)" font-size="6" fill="#507050" fill-opacity="0.6" textLength="33.5" lengthAdjust="spacingAndGlyphs">СТУДЕНТКА</text><text x="0" y="0" transform="translate(180.2,514.9) rotate(9)" font-size="6" fill="#a03040" fill-opacity="0.45" textLength="37.2" lengthAdjust="spacingAndGlyphs">РЕДАКТОРКА</text><text x="0" y="0" transform="translate(219.8,515.0) rotate(9)" font-size="4.5" fill="#8a3a7a" fill-opacity="0.45" font-weight="700" textLength="19.5" lengthAdjust="spacingAndGlyphs">АВТОРКА</text><text x="0" y="0" transform="translate(243.3,516.3) rotate(9)" font-size="7" fill="#b04050" fill-opacity="0.45" textLength="43.4" lengthAdjust="spacingAndGlyphs">ДИЗАЙНЕРКА</text><text x="0" y="0" transform="translate(289.9,515.5) rotate(9)" font-size="5" fill="#5a5a6a" fill-opacity="0.45" textLength="27.9" lengthAdjust="spacingAndGlyphs">СТУДЕНТКА</text><text x="0" y="0" transform="translate(323.2,514.4) rotate(9)" font-size="6" fill="#3c6ab0" fill-opacity="0.45" textLength="40.9" lengthAdjust="spacingAndGlyphs">ІНСПЕКТОРКА</text><text x="0" y="0" transform="translate(369.9,514.5) rotate(9)" font-size="4.5" fill="#a03040" fill-opacity="0.6" font-weight="700" textLength="19.5" lengthAdjust="spacingAndGlyphs">АВТОРКА</text><text x="0" y="0" transform="translate(394.4,514.1) rotate(9)" font-size="4.5" fill="#b04050" fill-opacity="0.3" textLength="33.5" lengthAdjust="spacingAndGlyphs">НАТУРАЛІСТКА</text><text x="0" y="0" transform="translate(432.6,513.9) rotate(9)" font-size="7.5" fill="#5a5a6a" fill-opacity="0.45" textLength="46.5" lengthAdjust="spacingAndGlyphs">ФІГУРИСТКА</text><text x="0" y="0" transform="translate(482.1,515.0) rotate(9)" font-size="6.5" fill="#707080" fill-opacity="0.3" textLength="40.3" lengthAdjust="spacingAndGlyphs">ДИЗАЙНЕРКА</text><text x="0" y="0" transform="translate(527.7,517.2) rotate(9)" font-size="7.5" fill="#3c6ab0" fill-opacity="0.3" textLength="32.5" lengthAdjust="spacingAndGlyphs">АВТОРКА</text><text x="0" y="0" transform="translate(86.7,524.3) rotate(-8)" font-size="5.5" fill="#707080" fill-opacity="0.3" textLength="37.5" lengthAdjust="spacingAndGlyphs">ІНСПЕКТОРКА</text><text x="0" y="0" transform="translate(128.7,523.7) rotate(-8)" font-size="6.5" fill="#60b060" fill-opacity="0.3" textLength="48.4" lengthAdjust="spacingAndGlyphs">НАТУРАЛІСТКА</text><text x="0" y="0" transform="translate(181.6,523.4) rotate(-8)" font-size="6.5" fill="#3a4a9a" fill-opacity="0.6" textLength="40.3" lengthAdjust="spacingAndGlyphs">РЕДАКТОРКА</text><text x="0" y="0" transform="translate(225.7,521.5) rotate(-8)" font-size="7.5" fill="#2a3a8a" fill-opacity="0.3" textLength="46.5" lengthAdjust="spacingAndGlyphs">РЕДАКТОРКА</text><text x="0" y="0" transform="translate(274.8,523.7) rotate(-8)" font-size="6" fill="#60b060" fill-opacity="0.45" textLength="37.2" lengthAdjust="spacingAndGlyphs">ФІГУРИСТКА</text><text x="0" y="0" transform="translate(314.4,521.1) rotate(-8)" font-size="7.5" fill="#b04050" fill-opacity="0.3" font-weight="700" textLength="55.8" lengthAdjust="spacingAndGlyphs">НАТУРАЛІСТКА</text><text x="0" y="0" transform="translate(374.8,520.9) rotate(-8)" font-size="7.5" fill="#507050" fill-opacity="0.45" textLength="41.9" lengthAdjust="spacingAndGlyphs">СТУДЕНТКА</text><text x="0" y="0" transform="translate(420.3,520.8) rotate(-8)" font-size="6" fill="#3a4a9a" fill-opacity="0.45" textLength="37.2" lengthAdjust="spacingAndGlyphs">ФІГУРИСТКА</text><text x="0" y="0" transform="translate(463.1,524.4) rotate(-8)" font-size="6" fill="#2a3a8a" fill-opacity="0.45" textLength="26.0" lengthAdjust="spacingAndGlyphs">АВТОРКА</text><text x="0" y="0" transform="translate(494.4,520.5) rotate(-8)" font-size="5.5" fill="#707080" fill-opacity="0.45" font-weight="700" textLength="37.5" lengthAdjust="spacingAndGlyphs">ІНСПЕКТОРКА</text><text x="0" y="0" transform="translate(534.6,521.3) rotate(-8)" font-size="4.5" fill="#d8c850" fill-opacity="0.3" font-weight="700" textLength="27.9" lengthAdjust="spacingAndGlyphs">ДИРЕКТОРКА</text><text x="0" y="0" transform="translate(83.4,527.6) rotate(9)" font-size="6" fill="#c04040" fill-opacity="0.6" textLength="37.2" lengthAdjust="spacingAndGlyphs">РЕДАКТОРКА</text><text x="0" y="0" transform="translate(125.5,527.9) rotate(9)" font-size="5.5" fill="#3a4a9a" fill-opacity="0.6" font-weight="700" textLength="34.1" lengthAdjust="spacingAndGlyphs">ФІГУРИСТКА</text><text x="0" y="0" transform="translate(164.1,527.4) rotate(9)" font-size="6" fill="#3a4a9a" fill-opacity="0.6" font-weight="700" textLength="33.5" lengthAdjust="spacingAndGlyphs">СТУДЕНТКА</text><text x="0" y="0" transform="translate(201.7,528.4) rotate(9)" font-size="6.5" fill="#60b060" fill-opacity="0.45" font-weight="700" textLength="28.2" lengthAdjust="spacingAndGlyphs">АВТОРКА</text><text x="0" y="0" transform="translate(232.3,530.8) rotate(9)" font-size="7.5" fill="#2a3a8a" fill-opacity="0.3" textLength="46.5" lengthAdjust="spacingAndGlyphs">ДИРЕКТОРКА</text><text x="0" y="0" transform="translate(281.5,530.1) rotate(9)" font-size="4.5" fill="#2a3a8a" fill-opacity="0.6" font-weight="700" textLength="30.7" lengthAdjust="spacingAndGlyphs">ІНСПЕКТОРКА</text><text x="0" y="0" transform="translate(317.6,527.6) rotate(9)" font-size="7.5" fill="#8a3a7a" fill-opacity="0.6" textLength="51.1" lengthAdjust="spacingAndGlyphs">ІНСПЕКТОРКА</text><text x="0" y="0" transform="translate(371.8,530.3) rotate(9)" font-size="7" fill="#c04040" fill-opacity="0.45" textLength="47.7" lengthAdjust="spacingAndGlyphs">ІНСПЕКТОРКА</text><text x="0" y="0" transform="translate(425.0,527.4) rotate(9)" font-size="7.5" fill="#8a3a7a" fill-opacity="0.3" font-weight="700" textLength="55.8" lengthAdjust="spacingAndGlyphs">НАТУРАЛІСТКА</text><text x="0" y="0" transform="translate(482.9,528.0) rotate(9)" font-size="6" fill="#c04040" fill-opacity="0.45" textLength="37.2" lengthAdjust="spacingAndGlyphs">ДИЗАЙНЕРКА</text><text x="0" y="0" transform="translate(523.1,531.0) rotate(9)" font-size="4.5" fill="#b04050" fill-opacity="0.3" font-weight="700" textLength="19.5" lengthAdjust="spacingAndGlyphs">АВТОРКА</text><text x="0" y="0" transform="translate(80.7,537.3) rotate(-8)" font-size="6" fill="#3c6ab0" fill-opacity="0.3" textLength="44.6" lengthAdjust="spacingAndGlyphs">НАТУРАЛІСТКА</text><text x="0" y="0" transform="translate(130.2,537.3) rotate(-8)" font-size="6" fill="#b04050" fill-opacity="0.6" font-weight="700" textLength="26.0" lengthAdjust="spacingAndGlyphs">АВТОРКА</text><text x="0" y="0" transform="translate(161.3,537.1) rotate(-8)" font-size="5" fill="#b04050" fill-opacity="0.6" textLength="31.0" lengthAdjust="spacingAndGlyphs">ДИЗАЙНЕРКА</text><text x="0" y="0" transform="translate(196.7,537.8) rotate(-8)" font-size="5.5" fill="#5a5a6a" fill-opacity="0.45" font-weight="700" textLength="30.7" lengthAdjust="spacingAndGlyphs">СТУДЕНТКА</text><text x="0" y="0" transform="translate(230.0,537.2) rotate(-8)" font-size="7" fill="#3c6ab0" fill-opacity="0.6" font-weight="700" textLength="30.4" lengthAdjust="spacingAndGlyphs">АВТОРКА</text><text x="0" y="0" transform="translate(262.6,537.1) rotate(-8)" font-size="6.5" fill="#60b060" fill-opacity="0.6" textLength="28.2" lengthAdjust="spacingAndGlyphs">АВТОРКА</text><text x="0" y="0" transform="translate(294.5,535.7) rotate(-8)" font-size="7" fill="#8a3a7a" fill-opacity="0.3" font-weight="700" textLength="47.7" lengthAdjust="spacingAndGlyphs">ІНСПЕКТОРКА</text><text x="0" y="0" transform="translate(348.1,538.1) rotate(-8)" font-size="6" fill="#d8c850" fill-opacity="0.45" textLength="40.9" lengthAdjust="spacingAndGlyphs">ІНСПЕКТОРКА</text><text x="0" y="0" transform="translate(391.5,537.2) rotate(-8)" font-size="5" fill="#60b060" fill-opacity="0.6" font-weight="700" textLength="31.0" lengthAdjust="spacingAndGlyphs">РЕДАКТОРКА</text><text x="0" y="0" transform="translate(424.5,538.6) rotate(-8)" font-size="7" fill="#d8c850" fill-opacity="0.6" textLength="43.4" lengthAdjust="spacingAndGlyphs">РЕДАКТОРКА</text><text x="0" y="0" transform="translate(470.1,538.0) rotate(-8)" font-size="4.5" fill="#5a5a6a" fill-opacity="0.6" font-weight="700" textLength="19.5" lengthAdjust="spacingAndGlyphs">АВТОРКА</text><text x="0" y="0" transform="translate(492.7,536.0) rotate(-8)" font-size="5" fill="#507050" fill-opacity="0.45" textLength="21.7" lengthAdjust="spacingAndGlyphs">АВТОРКА</text><text x="0" y="0" transform="translate(517.4,536.7) rotate(-8)" font-size="6" fill="#b04050" fill-opacity="0.3" font-weight="700" textLength="26.0" lengthAdjust="spacingAndGlyphs">АВТОРКА</text><text x="0" y="0" transform="translate(87.1,545.5) rotate(9)" font-size="5" fill="#707080" fill-opacity="0.45" textLength="31.0" lengthAdjust="spacingAndGlyphs">ФІГУРИСТКА</text><text x="0" y="0" transform="translate(120.6,545.5) rotate(9)" font-size="6" fill="#d8c850" fill-opacity="0.3" textLength="37.2" lengthAdjust="spacingAndGlyphs">РЕДАКТОРКА</text><text x="0" y="0" transform="translate(162.8,546.0) rotate(9)" font-size="7.5" fill="#c04040" fill-opacity="0.6" textLength="46.5" lengthAdjust="spacingAndGlyphs">ФІГУРИСТКА</text><text x="0" y="0" transform="translate(212.8,544.4) rotate(9)" font-size="7.5" fill="#8a3a7a" fill-opacity="0.45" textLength="51.1" lengthAdjust="spacingAndGlyphs">ІНСПЕКТОРКА</text><text x="0" y="0" transform="translate(269.2,544.1) rotate(9)" font-size="6" fill="#60b060" fill-opacity="0.6" font-weight="700" textLength="26.0" lengthAdjust="spacingAndGlyphs">АВТОРКА</text><text x="0" y="0" transform="translate(298.8,543.8) rotate(9)" font-size="4.5" fill="#60b060" fill-opacity="0.45" textLength="27.9" lengthAdjust="spacingAndGlyphs">ДИРЕКТОРКА</text><text x="0" y="0" transform="translate(330.9,546.7) rotate(9)" font-size="6" fill="#507050" fill-opacity="0.45" textLength="44.6" lengthAdjust="spacingAndGlyphs">НАТУРАЛІСТКА</text><text x="0" y="0" transform="translate(377.8,543.4) rotate(9)" font-size="5.5" fill="#8a3a7a" fill-opacity="0.45" textLength="23.9" lengthAdjust="spacingAndGlyphs">АВТОРКА</text><text x="0" y="0" transform="translate(406.3,546.1) rotate(9)" font-size="7.5" fill="#60b060" fill-opacity="0.6" textLength="46.5" lengthAdjust="spacingAndGlyphs">ДИРЕКТОРКА</text><text x="0" y="0" transform="translate(455.7,545.8) rotate(9)" font-size="7" fill="#60b060" fill-opacity="0.6" textLength="43.4" lengthAdjust="spacingAndGlyphs">РЕДАКТОРКА</text><text x="0" y="0" transform="translate(501.9,546.6) rotate(9)" font-size="5" fill="#3c6ab0" fill-opacity="0.45" textLength="31.0" lengthAdjust="spacingAndGlyphs">ФІГУРИСТКА</text><text x="0" y="0" transform="translate(538.1,543.2) rotate(9)" font-size="7" fill="#b04050" fill-opacity="0.6" font-weight="700" textLength="43.4" lengthAdjust="spacingAndGlyphs">РЕДАКТОРКА</text><text x="0" y="0" transform="translate(87.9,554.0) rotate(-8)" font-size="7" fill="#507050" fill-opacity="0.3" font-weight="700" textLength="43.4" lengthAdjust="spacingAndGlyphs">РЕДАКТОРКА</text><text x="0" y="0" transform="translate(134.8,553.4) rotate(-8)" font-size="7.5" fill="#507050" fill-opacity="0.45" textLength="55.8" lengthAdjust="spacingAndGlyphs">НАТУРАЛІСТКА</text><text x="0" y="0" transform="translate(194.1,553.6) rotate(-8)" font-size="6.5" fill="#a03040" fill-opacity="0.45" textLength="40.3" lengthAdjust="spacingAndGlyphs">ДИРЕКТОРКА</text><text x="0" y="0" transform="translate(238.2,552.2) rotate(-8)" font-size="6" fill="#2a3a8a" fill-opacity="0.6" textLength="37.2" lengthAdjust="spacingAndGlyphs">РЕДАКТОРКА</text><text x="0" y="0" transform="translate(278.3,553.8) rotate(-8)" font-size="6.5" fill="#c04040" fill-opacity="0.3" textLength="44.3" lengthAdjust="spacingAndGlyphs">ІНСПЕКТОРКА</text><text x="0" y="0" transform="translate(328.6,551.5) rotate(-8)" font-size="4.5" fill="#a03040" fill-opacity="0.45" textLength="19.5" lengthAdjust="spacingAndGlyphs">АВТОРКА</text><text x="0" y="0" transform="translate(353.8,553.8) rotate(-8)" font-size="7" fill="#8a3a7a" fill-opacity="0.6" font-weight="700" textLength="43.4" lengthAdjust="spacingAndGlyphs">ФІГУРИСТКА</text><text x="0" y="0" transform="translate(400.9,552.8) rotate(-8)" font-size="6.5" fill="#a03040" fill-opacity="0.45" textLength="48.4" lengthAdjust="spacingAndGlyphs">НАТУРАЛІСТКА</text><text x="0" y="0" transform="translate(455.0,552.1) rotate(-8)" font-size="6" fill="#b04050" fill-opacity="0.45" font-weight="700" textLength="37.2" lengthAdjust="spacingAndGlyphs">ДИЗАЙНЕРКА</text><text x="0" y="0" transform="translate(496.8,552.4) rotate(-8)" font-size="6" fill="#d8c850" fill-opacity="0.6" textLength="37.2" lengthAdjust="spacingAndGlyphs">РЕДАКТОРКА</text><text x="0" y="0" transform="translate(539.6,551.9) rotate(-8)" font-size="5" fill="#2a3a8a" fill-opacity="0.3" textLength="34.1" lengthAdjust="spacingAndGlyphs">ІНСПЕКТОРКА</text><text x="0" y="0" transform="translate(70.2,561.5) rotate(9)" font-size="6.5" fill="#8a3a7a" fill-opacity="0.6" textLength="40.3" lengthAdjust="spacingAndGlyphs">ФІГУРИСТКА</text><text x="0" y="0" transform="translate(113.1,561.6) rotate(9)" font-size="6" fill="#8a3a7a" fill-opacity="0.3" textLength="37.2" lengthAdjust="spacingAndGlyphs">ФІГУРИСТКА</text><text x="0" y="0" transform="translate(152.6,562.0) rotate(9)" font-size="6.5" fill="#c04040" fill-opacity="0.6" font-weight="700" textLength="40.3" lengthAdjust="spacingAndGlyphs">ДИЗАЙНЕРКА</text><text x="0" y="0" transform="translate(195.0,559.2) rotate(9)" font-size="4.5" fill="#a03040" fill-opacity="0.6" font-weight="700" textLength="27.9" lengthAdjust="spacingAndGlyphs">ДИРЕКТОРКА</text><text x="0" y="0" transform="translate(225.0,560.3) rotate(9)" font-size="7" fill="#b04050" fill-opacity="0.3" font-weight="700" textLength="43.4" lengthAdjust="spacingAndGlyphs">ФІГУРИСТКА</text><text x="0" y="0" transform="translate(271.1,561.6) rotate(9)" font-size="6" fill="#5a5a6a" fill-opacity="0.3" font-weight="700" textLength="44.6" lengthAdjust="spacingAndGlyphs">НАТУРАЛІСТКА</text><text x="0" y="0" transform="translate(320.1,558.6) rotate(9)" font-size="5" fill="#2a3a8a" fill-opacity="0.3" font-weight="700" textLength="31.0" lengthAdjust="spacingAndGlyphs">ДИРЕКТОРКА</text><text x="0" y="0" transform="translate(353.2,560.0) rotate(9)" font-size="5.5" fill="#8a3a7a" fill-opacity="0.6" textLength="34.1" lengthAdjust="spacingAndGlyphs">ДИЗАЙНЕРКА</text><text x="0" y="0" transform="translate(391.0,561.1) rotate(9)" font-size="4.5" fill="#5a5a6a" fill-opacity="0.3" textLength="19.5" lengthAdjust="spacingAndGlyphs">АВТОРКА</text><text x="0" y="0" transform="translate(415.4,558.1) rotate(9)" font-size="6" fill="#2a3a8a" fill-opacity="0.3" font-weight="700" textLength="40.9" lengthAdjust="spacingAndGlyphs">ІНСПЕКТОРКА</text><text x="0" y="0" transform="translate(461.8,559.8) rotate(9)" font-size="6.5" fill="#3a4a9a" fill-opacity="0.3" textLength="40.3" lengthAdjust="spacingAndGlyphs">ДИЗАЙНЕРКА</text><text x="0" y="0" transform="translate(504.3,558.2) rotate(9)" font-size="4.5" fill="#707080" fill-opacity="0.3" textLength="27.9" lengthAdjust="spacingAndGlyphs">ДИРЕКТОРКА</text><text x="0" y="0" transform="translate(535.1,558.0) rotate(9)" font-size="5.5" fill="#60b060" fill-opacity="0.45" textLength="34.1" lengthAdjust="spacingAndGlyphs">РЕДАКТОРКА</text><text x="0" y="0" transform="translate(85.7,566.6) rotate(-8)" font-size="6" fill="#5a5a6a" fill-opacity="0.6" font-weight="700" textLength="37.2" lengthAdjust="spacingAndGlyphs">ДИЗАЙНЕРКА</text><text x="0" y="0" transform="translate(125.8,566.9) rotate(-8)" font-size="7" fill="#3c6ab0" fill-opacity="0.3" textLength="43.4" lengthAdjust="spacingAndGlyphs">ФІГУРИСТКА</text><text x="0" y="0" transform="translate(171.9,565.0) rotate(-8)" font-size="7" fill="#2a3a8a" fill-opacity="0.45" textLength="47.7" lengthAdjust="spacingAndGlyphs">ІНСПЕКТОРКА</text><text x="0" y="0" transform="translate(223.9,568.5) rotate(-8)" font-size="6.5" fill="#8a3a7a" fill-opacity="0.45" textLength="40.3" lengthAdjust="spacingAndGlyphs">ДИЗАЙНЕРКА</text><text x="0" y="0" transform="translate(268.8,567.2) rotate(-8)" font-size="7" fill="#60b060" fill-opacity="0.3" textLength="43.4" lengthAdjust="spacingAndGlyphs">ДИЗАЙНЕРКА</text><text x="0" y="0" transform="translate(316.1,565.1) rotate(-8)" font-size="6" fill="#d8c850" fill-opacity="0.3" font-weight="700" textLength="40.9" lengthAdjust="spacingAndGlyphs">ІНСПЕКТОРКА</text><text x="0" y="0" transform="translate(360.4,565.5) rotate(-8)" font-size="6" fill="#3c6ab0" fill-opacity="0.45" textLength="37.2" lengthAdjust="spacingAndGlyphs">РЕДАКТОРКА</text><text x="0" y="0" transform="translate(401.7,568.3) rotate(-8)" font-size="7.5" fill="#707080" fill-opacity="0.3" textLength="46.5" lengthAdjust="spacingAndGlyphs">РЕДАКТОРКА</text><text x="0" y="0" transform="translate(451.7,567.5) rotate(-8)" font-size="7" fill="#d8c850" fill-opacity="0.3" font-weight="700" textLength="39.1" lengthAdjust="spacingAndGlyphs">СТУДЕНТКА</text><text x="0" y="0" transform="translate(494.0,568.4) rotate(-8)" font-size="6" fill="#3a4a9a" fill-opacity="0.3" font-weight="700" textLength="44.6" lengthAdjust="spacingAndGlyphs">НАТУРАЛІСТКА</text><text x="0" y="0" transform="translate(79.9,574.5) rotate(9)" font-size="6.5" fill="#8a3a7a" fill-opacity="0.6" font-weight="700" textLength="48.4" lengthAdjust="spacingAndGlyphs">НАТУРАЛІСТКА</text><text x="0" y="0" transform="translate(131.1,576.9) rotate(9)" font-size="5" fill="#8a3a7a" fill-opacity="0.45" font-weight="700" textLength="31.0" lengthAdjust="spacingAndGlyphs">ДИЗАЙНЕРКА</text><text x="0" y="0" transform="translate(164.2,575.1) rotate(9)" font-size="6" fill="#a03040" fill-opacity="0.6" textLength="37.2" lengthAdjust="spacingAndGlyphs">РЕДАКТОРКА</text><text x="0" y="0" transform="translate(204.2,576.1) rotate(9)" font-size="6.5" fill="#3a4a9a" fill-opacity="0.3" textLength="36.3" lengthAdjust="spacingAndGlyphs">СТУДЕНТКА</text><text x="0" y="0" transform="translate(244.7,573.8) rotate(9)" font-size="6" fill="#3a4a9a" fill-opacity="0.3" textLength="40.9" lengthAdjust="spacingAndGlyphs">ІНСПЕКТОРКА</text><text x="0" y="0" transform="translate(288.5,574.9) rotate(9)" font-size="7" fill="#507050" fill-opacity="0.6" textLength="43.4" lengthAdjust="spacingAndGlyphs">РЕДАКТОРКА</text><text x="0" y="0" transform="translate(337.4,573.6) rotate(9)" font-size="6" fill="#2a3a8a" fill-opacity="0.6" font-weight="700" textLength="37.2" lengthAdjust="spacingAndGlyphs">РЕДАКТОРКА</text><text x="0" y="0" transform="translate(379.4,576.3) rotate(9)" font-size="4.5" fill="#5a5a6a" fill-opacity="0.3" textLength="27.9" lengthAdjust="spacingAndGlyphs">ДИРЕКТОРКА</text><text x="0" y="0" transform="translate(413.3,573.9) rotate(9)" font-size="6.5" fill="#5a5a6a" fill-opacity="0.3" textLength="40.3" lengthAdjust="spacingAndGlyphs">ДИРЕКТОРКА</text><text x="0" y="0" transform="translate(456.7,573.7) rotate(9)" font-size="4.5" fill="#d8c850" fill-opacity="0.45" textLength="25.1" lengthAdjust="spacingAndGlyphs">СТУДЕНТКА</text><text x="0" y="0" transform="translate(484.6,576.4) rotate(9)" font-size="5.5" fill="#d8c850" fill-opacity="0.45" font-weight="700" textLength="34.1" lengthAdjust="spacingAndGlyphs">ФІГУРИСТКА</text><text x="0" y="0" transform="translate(523.2,575.5) rotate(9)" font-size="6" fill="#c04040" fill-opacity="0.45" font-weight="700" textLength="37.2" lengthAdjust="spacingAndGlyphs">РЕДАКТОРКА</text><text x="0" y="0" transform="translate(79.5,582.5) rotate(-8)" font-size="5" fill="#5a5a6a" fill-opacity="0.6" textLength="21.7" lengthAdjust="spacingAndGlyphs">АВТОРКА</text><text x="0" y="0" transform="translate(105.6,581.8) rotate(-8)" font-size="6" fill="#5a5a6a" fill-opacity="0.3" textLength="26.0" lengthAdjust="spacingAndGlyphs">АВТОРКА</text><text x="0" y="0" transform="translate(136.8,584.1) rotate(-8)" font-size="5" fill="#d8c850" fill-opacity="0.6" textLength="34.1" lengthAdjust="spacingAndGlyphs">ІНСПЕКТОРКА</text><text x="0" y="0" transform="translate(175.3,581.7) rotate(-8)" font-size="6" fill="#8a3a7a" fill-opacity="0.45" textLength="33.5" lengthAdjust="spacingAndGlyphs">СТУДЕНТКА</text><text x="0" y="0" transform="translate(214.5,584.1) rotate(-8)" font-size="4.5" fill="#5a5a6a" fill-opacity="0.6" textLength="33.5" lengthAdjust="spacingAndGlyphs">НАТУРАЛІСТКА</text><text x="0" y="0" transform="translate(252.1,581.5) rotate(-8)" font-size="7.5" fill="#3a4a9a" fill-opacity="0.6" font-weight="700" textLength="46.5" lengthAdjust="spacingAndGlyphs">РЕДАКТОРКА</text><text x="0" y="0" transform="translate(301.6,582.4) rotate(-8)" font-size="6" fill="#8a3a7a" fill-opacity="0.3" textLength="37.2" lengthAdjust="spacingAndGlyphs">РЕДАКТОРКА</text><text x="0" y="0" transform="translate(342.2,583.9) rotate(-8)" font-size="5" fill="#3a4a9a" fill-opacity="0.3" textLength="31.0" lengthAdjust="spacingAndGlyphs">ДИРЕКТОРКА</text><text x="0" y="0" transform="translate(378.0,584.2) rotate(-8)" font-size="7.5" fill="#3a4a9a" fill-opacity="0.6" textLength="55.8" lengthAdjust="spacingAndGlyphs">НАТУРАЛІСТКА</text><text x="0" y="0" transform="translate(438.6,582.5) rotate(-8)" font-size="6.5" fill="#3c6ab0" fill-opacity="0.3" font-weight="700" textLength="40.3" lengthAdjust="spacingAndGlyphs">РЕДАКТОРКА</text><text x="0" y="0" transform="translate(483.2,584.6) rotate(-8)" font-size="6.5" fill="#5a5a6a" fill-opacity="0.45" font-weight="700" textLength="36.3" lengthAdjust="spacingAndGlyphs">СТУДЕНТКА</text><text x="0" y="0" transform="translate(524.5,585.3) rotate(-8)" font-size="5.5" fill="#c04040" fill-opacity="0.3" textLength="34.1" lengthAdjust="spacingAndGlyphs">РЕДАКТОРКА</text><text x="0" y="0" transform="translate(75.2,592.0) rotate(9)" font-size="4.5" fill="#a03040" fill-opacity="0.3" textLength="25.1" lengthAdjust="spacingAndGlyphs">СТУДЕНТКА</text><text x="0" y="0" transform="translate(102.8,589.1) rotate(9)" font-size="7.5" fill="#b04050" fill-opacity="0.45" textLength="46.5" lengthAdjust="spacingAndGlyphs">ФІГУРИСТКА</text><text x="0" y="0" transform="translate(153.5,588.7) rotate(9)" font-size="5.5" fill="#8a3a7a" fill-opacity="0.45" textLength="34.1" lengthAdjust="spacingAndGlyphs">ФІГУРИСТКА</text><text x="0" y="0" transform="translate(193.6,591.3) rotate(9)" font-size="5" fill="#3c6ab0" fill-opacity="0.6" font-weight="700" textLength="37.2" lengthAdjust="spacingAndGlyphs">НАТУРАЛІСТКА</text><text x="0" y="0" transform="translate(233.9,589.2) rotate(9)" font-size="7" fill="#707080" fill-opacity="0.45" font-weight="700" textLength="52.1" lengthAdjust="spacingAndGlyphs">НАТУРАЛІСТКА</text><text x="0" y="0" transform="translate(288.0,590.9) rotate(9)" font-size="6" fill="#5a5a6a" fill-opacity="0.6" font-weight="700" textLength="37.2" lengthAdjust="spacingAndGlyphs">ДИЗАЙНЕРКА</text><text x="0" y="0" transform="translate(330.0,591.4) rotate(9)" font-size="5" fill="#2a3a8a" fill-opacity="0.45" textLength="27.9" lengthAdjust="spacingAndGlyphs">СТУДЕНТКА</text><text x="0" y="0" transform="translate(363.2,592.3) rotate(9)" font-size="6.5" fill="#2a3a8a" fill-opacity="0.6" font-weight="700" textLength="40.3" lengthAdjust="spacingAndGlyphs">ФІГУРИСТКА</text><text x="0" y="0" transform="translate(406.2,589.2) rotate(9)" font-size="6.5" fill="#d8c850" fill-opacity="0.45" textLength="40.3" lengthAdjust="spacingAndGlyphs">ФІГУРИСТКА</text><text x="0" y="0" transform="translate(449.4,589.4) rotate(9)" font-size="6.5" fill="#507050" fill-opacity="0.3" textLength="40.3" lengthAdjust="spacingAndGlyphs">РЕДАКТОРКА</text><text x="0" y="0" transform="translate(494.0,590.4) rotate(9)" font-size="4.5" fill="#3a4a9a" fill-opacity="0.6" textLength="27.9" lengthAdjust="spacingAndGlyphs">ДИРЕКТОРКА</text><text x="0" y="0" transform="translate(524.5,591.2) rotate(9)" font-size="5" fill="#2a3a8a" fill-opacity="0.3" textLength="31.0" lengthAdjust="spacingAndGlyphs">ФІГУРИСТКА</text><text x="0" y="0" transform="translate(69.8,597.6) rotate(-8)" font-size="7.5" fill="#707080" fill-opacity="0.45" font-weight="700" textLength="32.5" lengthAdjust="spacingAndGlyphs">АВТОРКА</text><text x="0" y="0" transform="translate(104.4,597.1) rotate(-8)" font-size="5.5" fill="#507050" fill-opacity="0.6" textLength="34.1" lengthAdjust="spacingAndGlyphs">ДИРЕКТОРКА</text><text x="0" y="0" transform="translate(143.3,596.9) rotate(-8)" font-size="5" fill="#707080" fill-opacity="0.6" textLength="34.1" lengthAdjust="spacingAndGlyphs">ІНСПЕКТОРКА</text><text x="0" y="0" transform="translate(180.1,600.1) rotate(-8)" font-size="4.5" fill="#707080" fill-opacity="0.45" font-weight="700" textLength="27.9" lengthAdjust="spacingAndGlyphs">ФІГУРИСТКА</text><text x="0" y="0" transform="translate(212.2,598.1) rotate(-8)" font-size="5" fill="#8a3a7a" fill-opacity="0.45" textLength="37.2" lengthAdjust="spacingAndGlyphs">НАТУРАЛІСТКА</text><text x="0" y="0" transform="translate(255.3,599.3) rotate(-8)" font-size="7" fill="#c04040" fill-opacity="0.6" textLength="43.4" lengthAdjust="spacingAndGlyphs">РЕДАКТОРКА</text><text x="0" y="0" transform="translate(303.4,598.8) rotate(-8)" font-size="7" fill="#60b060" fill-opacity="0.3" font-weight="700" textLength="43.4" lengthAdjust="spacingAndGlyphs">ФІГУРИСТКА</text><text x="0" y="0" transform="translate(350.0,597.7) rotate(-8)" font-size="4.5" fill="#3a4a9a" fill-opacity="0.45" font-weight="700" textLength="30.7" lengthAdjust="spacingAndGlyphs">ІНСПЕКТОРКА</text><text x="0" y="0" transform="translate(385.5,599.2) rotate(-8)" font-size="6.5" fill="#8a3a7a" fill-opacity="0.45" textLength="40.3" lengthAdjust="spacingAndGlyphs">РЕДАКТОРКА</text><text x="0" y="0" transform="translate(429.9,597.3) rotate(-8)" font-size="7" fill="#507050" fill-opacity="0.3" textLength="52.1" lengthAdjust="spacingAndGlyphs">НАТУРАЛІСТКА</text><text x="0" y="0" transform="translate(486.2,599.5) rotate(-8)" font-size="6" fill="#507050" fill-opacity="0.6" textLength="37.2" lengthAdjust="spacingAndGlyphs">ДИЗАЙНЕРКА</text><text x="0" y="0" transform="translate(528.0,598.7) rotate(-8)" font-size="6" fill="#8a3a7a" fill-opacity="0.6" font-weight="700" textLength="44.6" lengthAdjust="spacingAndGlyphs">НАТУРАЛІСТКА</text><text x="0" y="0" transform="translate(86.2,605.1) rotate(9)" font-size="7" fill="#5a5a6a" fill-opacity="0.3" textLength="43.4" lengthAdjust="spacingAndGlyphs">ДИЗАЙНЕРКА</text><text x="0" y="0" transform="translate(135.0,608.1) rotate(9)" font-size="5" fill="#707080" fill-opacity="0.6" textLength="31.0" lengthAdjust="spacingAndGlyphs">ДИЗАЙНЕРКА</text><text x="0" y="0" transform="translate(168.7,605.4) rotate(9)" font-size="7.5" fill="#b04050" fill-opacity="0.3" font-weight="700" textLength="41.9" lengthAdjust="spacingAndGlyphs">СТУДЕНТКА</text><text x="0" y="0" transform="translate(214.2,604.9) rotate(9)" font-size="6.5" fill="#a03040" fill-opacity="0.3" font-weight="700" textLength="28.2" lengthAdjust="spacingAndGlyphs">АВТОРКА</text><text x="0" y="0" transform="translate(246.2,608.5) rotate(9)" font-size="5.5" fill="#d8c850" fill-opacity="0.6" textLength="34.1" lengthAdjust="spacingAndGlyphs">ДИЗАЙНЕРКА</text><text x="0" y="0" transform="translate(286.3,608.3) rotate(9)" font-size="5" fill="#3c6ab0" fill-opacity="0.45" textLength="27.9" lengthAdjust="spacingAndGlyphs">СТУДЕНТКА</text><text x="0" y="0" transform="translate(319.2,605.3) rotate(9)" font-size="4.5" fill="#507050" fill-opacity="0.6" textLength="30.7" lengthAdjust="spacingAndGlyphs">ІНСПЕКТОРКА</text><text x="0" y="0" transform="translate(354.8,608.1) rotate(9)" font-size="7.5" fill="#a03040" fill-opacity="0.3" textLength="51.1" lengthAdjust="spacingAndGlyphs">ІНСПЕКТОРКА</text><text x="0" y="0" transform="translate(409.4,608.5) rotate(9)" font-size="5" fill="#a03040" fill-opacity="0.3" font-weight="700" textLength="34.1" lengthAdjust="spacingAndGlyphs">ІНСПЕКТОРКА</text><text x="0" y="0" transform="translate(446.5,608.2) rotate(9)" font-size="7.5" fill="#a03040" fill-opacity="0.45" font-weight="700" textLength="41.9" lengthAdjust="spacingAndGlyphs">СТУДЕНТКА</text><text x="0" y="0" transform="translate(490.8,605.1) rotate(9)" font-size="7.5" fill="#b04050" fill-opacity="0.3" textLength="32.5" lengthAdjust="spacingAndGlyphs">АВТОРКА</text><text x="0" y="0" transform="translate(526.0,607.2) rotate(9)" font-size="7" fill="#2a3a8a" fill-opacity="0.6" textLength="43.4" lengthAdjust="spacingAndGlyphs">ФІГУРИСТКА</text><text x="0" y="0" transform="translate(73.4,614.2) rotate(-8)" font-size="4.5" fill="#a03040" fill-opacity="0.45" textLength="33.5" lengthAdjust="spacingAndGlyphs">НАТУРАЛІСТКА</text><text x="0" y="0" transform="translate(110.9,613.6) rotate(-8)" font-size="4.5" fill="#b04050" fill-opacity="0.6" font-weight="700" textLength="19.5" lengthAdjust="spacingAndGlyphs">АВТОРКА</text><text x="0" y="0" transform="translate(134.8,616.2) rotate(-8)" font-size="5.5" fill="#3c6ab0" fill-opacity="0.3" textLength="40.9" lengthAdjust="spacingAndGlyphs">НАТУРАЛІСТКА</text><text x="0" y="0" transform="translate(181.2,615.0) rotate(-8)" font-size="6.5" fill="#60b060" fill-opacity="0.3" textLength="40.3" lengthAdjust="spacingAndGlyphs">ДИЗАЙНЕРКА</text><text x="0" y="0" transform="translate(225.9,616.1) rotate(-8)" font-size="6" fill="#2a3a8a" fill-opacity="0.45" font-weight="700" textLength="26.0" lengthAdjust="spacingAndGlyphs">АВТОРКА</text><text x="0" y="0" transform="translate(255.2,614.1) rotate(-8)" font-size="7" fill="#60b060" fill-opacity="0.6" textLength="52.1" lengthAdjust="spacingAndGlyphs">НАТУРАЛІСТКА</text><text x="0" y="0" transform="translate(311.2,614.7) rotate(-8)" font-size="4.5" fill="#3a4a9a" fill-opacity="0.3" font-weight="700" textLength="25.1" lengthAdjust="spacingAndGlyphs">СТУДЕНТКА</text><text x="0" y="0" transform="translate(340.9,613.9) rotate(-8)" font-size="6" fill="#d8c850" fill-opacity="0.45" font-weight="700" textLength="37.2" lengthAdjust="spacingAndGlyphs">РЕДАКТОРКА</text><text x="0" y="0" transform="translate(381.5,616.5) rotate(-8)" font-size="4.5" fill="#8a3a7a" fill-opacity="0.3" textLength="27.9" lengthAdjust="spacingAndGlyphs">РЕДАКТОРКА</text><text x="0" y="0" transform="translate(414.5,616.0) rotate(-8)" font-size="6.5" fill="#507050" fill-opacity="0.3" textLength="40.3" lengthAdjust="spacingAndGlyphs">ДИЗАЙНЕРКА</text><text x="0" y="0" transform="translate(459.5,614.3) rotate(-8)" font-size="6.5" fill="#3c6ab0" fill-opacity="0.3" font-weight="700" textLength="40.3" lengthAdjust="spacingAndGlyphs">ФІГУРИСТКА</text><text x="0" y="0" transform="translate(503.2,615.7) rotate(-8)" font-size="6.5" fill="#a03040" fill-opacity="0.45" font-weight="700" textLength="40.3" lengthAdjust="spacingAndGlyphs">ДИРЕКТОРКА</text><text x="0" y="0" transform="translate(78.1,621.5) rotate(9)" font-size="6" fill="#60b060" fill-opacity="0.3" textLength="33.5" lengthAdjust="spacingAndGlyphs">СТУДЕНТКА</text><text x="0" y="0" transform="translate(117.1,622.5) rotate(9)" font-size="7" fill="#707080" fill-opacity="0.3" textLength="52.1" lengthAdjust="spacingAndGlyphs">НАТУРАЛІСТКА</text><text x="0" y="0" transform="translate(173.5,622.1) rotate(9)" font-size="6" fill="#3c6ab0" fill-opacity="0.6" font-weight="700" textLength="37.2" lengthAdjust="spacingAndGlyphs">РЕДАКТОРКА</text><text x="0" y="0" transform="translate(214.9,623.2) rotate(9)" font-size="5" fill="#3a4a9a" fill-opacity="0.6" textLength="34.1" lengthAdjust="spacingAndGlyphs">ІНСПЕКТОРКА</text><text x="0" y="0" transform="translate(251.8,624.8) rotate(9)" font-size="7.5" fill="#60b060" fill-opacity="0.45" font-weight="700" textLength="51.1" lengthAdjust="spacingAndGlyphs">ІНСПЕКТОРКА</text><text x="0" y="0" transform="translate(307.8,624.5) rotate(9)" font-size="7.5" fill="#60b060" fill-opacity="0.45" textLength="46.5" lengthAdjust="spacingAndGlyphs">ДИЗАЙНЕРКА</text><text x="0" y="0" transform="translate(358.5,623.7) rotate(9)" font-size="6" fill="#3a4a9a" fill-opacity="0.3" textLength="37.2" lengthAdjust="spacingAndGlyphs">РЕДАКТОРКА</text><text x="0" y="0" transform="translate(399.3,623.5) rotate(9)" font-size="6" fill="#8a3a7a" fill-opacity="0.3" textLength="33.5" lengthAdjust="spacingAndGlyphs">СТУДЕНТКА</text><text x="0" y="0" transform="translate(437.7,621.2) rotate(9)" font-size="4.5" fill="#b04050" fill-opacity="0.45" font-weight="700" textLength="27.9" lengthAdjust="spacingAndGlyphs">РЕДАКТОРКА</text><text x="0" y="0" transform="translate(470.5,623.1) rotate(9)" font-size="6" fill="#507050" fill-opacity="0.6" textLength="26.0" lengthAdjust="spacingAndGlyphs">АВТОРКА</text><text x="0" y="0" transform="translate(499.8,622.2) rotate(9)" font-size="6" fill="#60b060" fill-opacity="0.3" font-weight="700" textLength="26.0" lengthAdjust="spacingAndGlyphs">АВТОРКА</text><text x="0" y="0" transform="translate(530.4,621.1) rotate(9)" font-size="6.5" fill="#2a3a8a" fill-opacity="0.3" textLength="40.3" lengthAdjust="spacingAndGlyphs">ДИРЕКТОРКА</text><text x="0" y="0" transform="translate(83.5,632.1) rotate(-8)" font-size="6" fill="#707080" fill-opacity="0.45" textLength="37.2" lengthAdjust="spacingAndGlyphs">ДИРЕКТОРКА</text><text x="0" y="0" transform="translate(125.0,631.1) rotate(-8)" font-size="4.5" fill="#d8c850" fill-opacity="0.45" font-weight="700" textLength="30.7" lengthAdjust="spacingAndGlyphs">ІНСПЕКТОРКА</text><text x="0" y="0" transform="translate(158.3,629.2) rotate(-8)" font-size="5.5" fill="#3a4a9a" fill-opacity="0.45" textLength="23.9" lengthAdjust="spacingAndGlyphs">АВТОРКА</text><text x="0" y="0" transform="translate(187.4,631.4) rotate(-8)" font-size="6.5" fill="#8a3a7a" fill-opacity="0.3" font-weight="700" textLength="40.3" lengthAdjust="spacingAndGlyphs">ДИРЕКТОРКА</text><text x="0" y="0" transform="translate(232.3,631.1) rotate(-8)" font-size="6" fill="#3c6ab0" fill-opacity="0.45" font-weight="700" textLength="40.9" lengthAdjust="spacingAndGlyphs">ІНСПЕКТОРКА</text><text x="0" y="0" transform="translate(278.3,629.7) rotate(-8)" font-size="7.5" fill="#8a3a7a" fill-opacity="0.6" font-weight="700" textLength="46.5" lengthAdjust="spacingAndGlyphs">ФІГУРИСТКА</text><text x="0" y="0" transform="translate(330.6,630.9) rotate(-8)" font-size="6" fill="#a03040" fill-opacity="0.6" textLength="37.2" lengthAdjust="spacingAndGlyphs">РЕДАКТОРКА</text><text x="0" y="0" transform="translate(373.0,629.5) rotate(-8)" font-size="5.5" fill="#5a5a6a" fill-opacity="0.3" textLength="37.5" lengthAdjust="spacingAndGlyphs">ІНСПЕКТОРКА</text><text x="0" y="0" transform="translate(415.0,630.6) rotate(-8)" font-size="4.5" fill="#8a3a7a" fill-opacity="0.3" font-weight="700" textLength="27.9" lengthAdjust="spacingAndGlyphs">ДИЗАЙНЕРКА</text><text x="0" y="0" transform="translate(446.0,632.1) rotate(-8)" font-size="5.5" fill="#2a3a8a" fill-opacity="0.6" textLength="37.5" lengthAdjust="spacingAndGlyphs">ІНСПЕКТОРКА</text><text x="0" y="0" transform="translate(485.6,629.5) rotate(-8)" font-size="7.5" fill="#707080" fill-opacity="0.45" textLength="41.9" lengthAdjust="spacingAndGlyphs">СТУДЕНТКА</text><text x="0" y="0" transform="translate(531.3,631.3) rotate(-8)" font-size="4.5" fill="#b04050" fill-opacity="0.3" textLength="30.7" lengthAdjust="spacingAndGlyphs">ІНСПЕКТОРКА</text></g><text x="0" y="0" transform="translate(131.0,541.0) rotate(-11.2)" font-size="55" fill="#1c22a0" textLength="382.0" lengthAdjust="spacingAndGlyphs">ДИЗАЙНЕРКА</text><text x="0" y="0" transform="translate(198.0,381.5) rotate(10.4)" font-size="43" fill="#3cc43c" textLength="252.0" lengthAdjust="spacingAndGlyphs">СТУДЕНТКА</text><text x="0" y="0" transform="translate(146.5,409.5) rotate(11.7)" font-size="36" fill="#a81c2c" textLength="215.0" lengthAdjust="spacingAndGlyphs">РЕДАКТОРКА</text><text x="0" y="0" transform="translate(271.0,548.5) rotate(10.7)" font-size="45" fill="#d0141c" font-family="Liberation Serif" textLength="214.0" lengthAdjust="spacingAndGlyphs">АВТОРКА</text><text x="0" y="0" transform="translate(192.5,564.5) rotate(11.2)" font-size="35" fill="#1f4a96" font-weight="700" font-family="Liberation Serif" textLength="217.0" lengthAdjust="spacingAndGlyphs">ФІГУРИСТКА</text><text x="0" y="0" transform="translate(108.0,483.5) rotate(-9.8)" font-size="27" fill="#1a2490" font-weight="700" textLength="180.0" lengthAdjust="spacingAndGlyphs">ІНСПЕКТОРКА</text><text x="0" y="0" transform="translate(333.0,524.5) rotate(8.5)" font-size="28" fill="#6c2a72" textLength="189.0" lengthAdjust="spacingAndGlyphs">ДИРЕКТОРКА</text><text x="0" y="0" transform="translate(404.0,511.5) rotate(9)" font-size="27" fill="#52c452" textLength="125.0" lengthAdjust="spacingAndGlyphs">СТУДЕНТКА</text><text x="0" y="0" transform="translate(441.0,494.0) rotate(8)" font-size="20" fill="#585868" textLength="89.0" lengthAdjust="spacingAndGlyphs">ДИЗАЙНЕРКА</text><text x="0" y="0" transform="translate(135.5,575.0) rotate(11)" font-size="25" fill="#e2cf42" font-weight="700" textLength="164.0" lengthAdjust="spacingAndGlyphs">НАТУРАЛІСТКА</text><text x="0" y="0" transform="translate(157.5,597.0) rotate(11)" font-size="25" fill="#1f3c82" font-weight="700" font-family="Liberation Serif" textLength="119.0" lengthAdjust="spacingAndGlyphs">ФІГУРИСТКА</text><text x="0" y="0" transform="translate(298.0,600.0) rotate(9.5)" font-size="19" fill="#283a7a" font-weight="700" textLength="96.0" lengthAdjust="spacingAndGlyphs">ІНСПЕКТОРКА</text><text x="0" y="0" transform="translate(320.0,612.0) rotate(10)" font-size="13" fill="#2a3c70" font-weight="700" textLength="58.0" lengthAdjust="spacingAndGlyphs">ФІГУРИСТКА</text><text x="0" y="0" transform="translate(403.0,590.0) rotate(9)" font-size="17" fill="#6a5070" textLength="69.0" lengthAdjust="spacingAndGlyphs">ДИРЕКТОРКА</text><text x="0" y="0" transform="translate(380.5,380.0) rotate(9.5)" font-size="21" fill="#a01c2c" font-weight="700" font-family="Liberation Serif" textLength="104.0" lengthAdjust="spacingAndGlyphs">АВТОРКА</text><text x="0" y="0" transform="translate(400.0,367.0) rotate(9)" font-size="15" fill="#b03040" font-weight="700" font-family="Liberation Serif" textLength="69.0" lengthAdjust="spacingAndGlyphs">АВТОРКА</text><text x="0" y="0" transform="translate(408.5,358.0) rotate(9)" font-size="11" fill="#2a3a70" font-weight="700" font-family="Liberation Serif" textLength="48.0" lengthAdjust="spacingAndGlyphs">ФІГУРИСТКА</text><text x="0" y="0" transform="translate(450.0,404.0) rotate(9)" font-size="14" fill="#7a5050" textLength="52.0" lengthAdjust="spacingAndGlyphs">РЕДАКТОРКА</text><text x="0" y="0" transform="translate(447.5,429.5) rotate(-8)" font-size="17" fill="#8a4050" textLength="68.0" lengthAdjust="spacingAndGlyphs">РЕДАКТОРКА</text><text x="0" y="0" transform="translate(359.0,426.0) rotate(9)" font-size="17" fill="#8ac88a" textLength="70.0" lengthAdjust="spacingAndGlyphs">СТУДЕНТКА</text><text x="0" y="0" transform="translate(276.0,362.0) rotate(8)" font-size="17" fill="#6a4a78" textLength="92.0" lengthAdjust="spacingAndGlyphs">ДИРЕКТОРКА</text><text x="0" y="0" transform="translate(285.0,351.0) rotate(5)" font-size="13" fill="#e0d070" textLength="76.0" lengthAdjust="spacingAndGlyphs">НАТУРАЛІСТКА</text><text x="0" y="0" transform="translate(104.5,436.5) rotate(-10)" font-size="20" fill="#a84040" textLength="82.0" lengthAdjust="spacingAndGlyphs">РЕДАКТОРКА</text><text x="0" y="0" transform="translate(105.5,463.0) rotate(-12)" font-size="24" fill="#505058" textLength="120.0" lengthAdjust="spacingAndGlyphs">ДИЗАЙНЕРКА</text><text x="0" y="0" transform="translate(149.0,384.0) rotate(8)" font-size="15" fill="#a02030" font-weight="700" textLength="55.0" lengthAdjust="spacingAndGlyphs">АВТОРКА</text><text x="0" y="0" transform="translate(156.5,371.0) rotate(-8)" font-size="12" fill="#606068" textLength="46.0" lengthAdjust="spacingAndGlyphs">ДИЗАЙНЕРКА</text><text x="0" y="0" transform="translate(115.5,414.0) rotate(-8)" font-size="12" fill="#a02838" font-weight="700" textLength="32.0" lengthAdjust="spacingAndGlyphs">АВТОРКА</text><text x="0" y="0" transform="translate(119.5,422.0) rotate(-10)" font-size="14" fill="#80c080" textLength="48.0" lengthAdjust="spacingAndGlyphs">СТУДЕНТКА</text><text x="0" y="0" transform="translate(169.5,358.0) rotate(-10)" font-size="14" fill="#e0d070" textLength="62.0" lengthAdjust="spacingAndGlyphs">НАТУРАЛІСТКА</text><text x="0" y="0" transform="translate(224.0,400.0) rotate(8)" font-size="12" fill="#283a7a" font-weight="700" textLength="52.0" lengthAdjust="spacingAndGlyphs">ІНСПЕКТОРКА</text><text x="0" y="0" transform="translate(219.5,435.0) rotate(8)" font-size="12" fill="#2a3a70" font-weight="700" font-family="Liberation Serif" textLength="47.0" lengthAdjust="spacingAndGlyphs">ФІГУРИСТКА</text><text x="0" y="0" transform="translate(159.5,436.0) rotate(-8)" font-size="11" fill="#3a4a80" textLength="38.0" lengthAdjust="spacingAndGlyphs">ІНСПЕКТОРКА</text><text x="0" y="0" transform="translate(290.0,446.0) rotate(8)" font-size="13" fill="#283a7a" font-weight="700" textLength="52.0" lengthAdjust="spacingAndGlyphs">ІНСПЕКТОРКА</text><text x="0" y="0" transform="translate(303.5,459.0) rotate(5)" font-size="11" fill="#704878" textLength="45.0" lengthAdjust="spacingAndGlyphs">ДИРЕКТОРКА</text><text x="0" y="0" transform="translate(305.5,417.0) rotate(8)" font-size="12" fill="#a84050" textLength="47.0" lengthAdjust="spacingAndGlyphs">РЕДАКТОРКА</text><text x="0" y="0" transform="translate(223.5,471.0) rotate(-10)" font-size="15" fill="#90d890" textLength="61.0" lengthAdjust="spacingAndGlyphs">СТУДЕНТКА</text><text x="0" y="0" transform="translate(113.0,494.0) rotate(-10)" font-size="20" fill="#e8dc70" font-weight="700" textLength="106.0" lengthAdjust="spacingAndGlyphs">НАТУРАЛІСТКА</text><text x="0" y="0" transform="translate(188.5,542.0) rotate(-10)" font-size="17" fill="#1f3c82" font-weight="700" font-family="Liberation Serif" textLength="86.0" lengthAdjust="spacingAndGlyphs">ФІГУРИСТКА</text><text x="0" y="0" transform="translate(232.5,544.0) rotate(-10)" font-size="12" fill="#806080" textLength="46.0" lengthAdjust="spacingAndGlyphs">ДИРЕКТОРКА</text><text x="0" y="0" transform="translate(139.0,558.0) rotate(9)" font-size="14" fill="#606068" textLength="57.0" lengthAdjust="spacingAndGlyphs">ДИЗАЙНЕРКА</text><text x="0" y="0" transform="translate(129.5,582.0) rotate(9)" font-size="11" fill="#a83040" font-weight="700" textLength="31.0" lengthAdjust="spacingAndGlyphs">АВТОРКА</text><text x="0" y="0" transform="translate(293.0,518.0) rotate(8)" font-size="9" fill="#a05060" textLength="30.0" lengthAdjust="spacingAndGlyphs">РЕДАКТОРКА</text></svg>
<div class="a" style="left:0px;top:718px;width:1046px;height:50px;background:#000000;"></div>
<svg style="left:39px;top:727px" width="27" height="26" viewBox="0 0 27 26"><rect x="8.4" y="1" width="9.4" height="16.5" rx="4.7" fill="none" stroke="#f2f2f2" stroke-width="1.5"/><path d="M5.3 12.5 Q5.3 19.8 13.1 19.8 Q20.9 19.8 20.9 12.5 M13.1 19.8 V23.5 M8.4 23.5 H17.8" fill="none" stroke="#f2f2f2" stroke-width="1.5"/><path d="M2 23.5 L24.4 1.7" stroke="#e8205a" stroke-width="2.6" stroke-linecap="round"/></svg>
<svg style="left:80px;top:737px" width="9" height="6" viewBox="0 0 9 6"><path d="M1 5 L4.5 1.5 L8 5" stroke="#c8c8c8" stroke-width="1.2" fill="none"/></svg>
<svg style="left:132px;top:732px" width="27" height="17" viewBox="0 0 27 17"><rect x="1.3" y="1.7" width="15.6" height="13.1" rx="3" fill="none" stroke="#f2f2f2" stroke-width="1.5"/><path d="M17 6.5 L24.8 1.8 V14.7 L17 10" fill="none" stroke="#f2f2f2" stroke-width="1.5" stroke-linejoin="round"/></svg>
<svg style="left:177.5px;top:737px" width="9" height="6" viewBox="0 0 9 6"><path d="M1 5 L4.5 1.5 L8 5" stroke="#c8c8c8" stroke-width="1.2" fill="none"/></svg>
<svg style="left:279px;top:731px" width="21" height="19" viewBox="0 0 21 19"><circle cx="5.8" cy="3.6" r="2.4" fill="none" stroke="#f2f2f2" stroke-width="1.4"/><circle cx="12.3" cy="6.8" r="2.8" fill="none" stroke="#f2f2f2" stroke-width="1.4"/><path d="M8.5 9.2 Q7 8.4 5.5 8.4 Q1.2 8.4 1.2 12.8 Q1.2 16.6 5 16.6 H8.5" fill="none" stroke="#f2f2f2" stroke-width="1.4"/><rect x="8.5" y="11" width="11" height="6.5" rx="3.25" fill="none" stroke="#f2f2f2" stroke-width="1.4"/></svg>
<svg style="left:304px;top:730px" width="20" height="16" viewBox="304 730 20 16"><text x="305.4" y="742" font-size="12.3" fill="#cfcfcf" textLength="14.8" lengthAdjust="spacingAndGlyphs">171</text></svg>
<svg style="left:337.5px;top:737px" width="9" height="6" viewBox="0 0 9 6"><path d="M1 5 L4.5 1.5 L8 5" stroke="#c8c8c8" stroke-width="1.2" fill="none"/></svg>
<svg style="left:386px;top:728px" width="21" height="24" viewBox="0 0 21 24"><path d="M6.5 3.5 Q6.5 1 9 1 H16" fill="none" stroke="#f2f2f2" stroke-width="1.4"/><path d="M5 6.5 H15 Q19 6.5 19 10.5 V15.5 Q19 19.5 15 19.5 H8.5 L5.5 22.3 V19.3 Q1.5 18.8 1.5 15 V10 Q1.5 6.5 5 6.5 Z" fill="none" stroke="#f2f2f2" stroke-width="1.4"/><circle cx="6.5" cy="13" r="1" fill="#f2f2f2"/><circle cx="10.3" cy="13" r="1" fill="#f2f2f2"/><circle cx="14.1" cy="13" r="1" fill="#f2f2f2"/></svg>
<div class="a" style="left:401.5px;top:724.5px;width:23px;height:18.5px;border-radius:9.5px;background:#e5484d;border:1.5px solid #000"></div>
<div class="t" style="left:408.30px;top:728.11px;font-size:10.5px;color:#fff;font-weight:700;">14</div>
<svg style="left:427.5px;top:737px" width="9" height="6" viewBox="0 0 9 6"><path d="M1 5 L4.5 1.5 L8 5" stroke="#c8c8c8" stroke-width="1.2" fill="none"/></svg>
<svg style="left:480px;top:729px" width="26" height="23" viewBox="0 0 26 23"><path d="M13.5 20.8 C6 17 1.6 12.5 2.2 7.6 C2.8 3 7.8 1.6 11.2 5.2 C14 1 19.6 1.6 21.6 5.4 C24 10 20 15.8 13.5 20.8 Z" fill="none" stroke="#f2f2f2" stroke-width="1.5" stroke-linejoin="round" transform="rotate(-12 13 11)"/></svg>
<svg style="left:580px;top:730px" width="24" height="20" viewBox="0 0 24 20"><rect x="0" y="0" width="24" height="20" rx="3.5" fill="#20e07a"/><path d="M12 15.5 V6.5 M7.8 10 L12 5.2 L16.2 10" stroke="#000" stroke-width="2.6" fill="none" stroke-linejoin="miter"/></svg>
<svg style="left:675px;top:728px" width="26" height="24" viewBox="0 0 26 24"><path d="M10.5 4 Q12 12 19.5 13.5 Q12 15 10.5 22.5 Q9 15 1.5 13.5 Q9 12 10.5 4 Z" fill="none" stroke="#eec45a" stroke-width="1.5" stroke-linejoin="round"/><path d="M20.5 0.6 Q21 3.4 24 4 Q21 4.6 20.5 7.4 Q20 4.6 17 4 Q20 3.4 20.5 0.6 Z" fill="#eec45a"/></svg>
<svg style="left:766px;top:729px" width="24" height="23" viewBox="0 0 24 23"><path d="M1.5 11 V6 Q1.5 1.2 6.5 1.2 H10" fill="none" stroke="#f2f2f2" stroke-width="1.5"/><path d="M22 12 V16.5 Q22 21.5 17 21.5 H13" fill="none" stroke="#f2f2f2" stroke-width="1.5"/><circle cx="18" cy="5.2" r="3.6" fill="none" stroke="#f2f2f2" stroke-width="1.5"/><circle cx="5.5" cy="17.3" r="3.6" fill="none" stroke="#f2f2f2" stroke-width="1.5"/></svg>
<svg style="left:862px;top:727px" width="26" height="26" viewBox="0 0 26 26"><circle cx="13" cy="13" r="11.5" fill="none" stroke="#f2f2f2" stroke-width="1.6"/><circle cx="7.6" cy="13" r="1.3" fill="#f2f2f2"/><circle cx="13" cy="13" r="1.3" fill="#f2f2f2"/><circle cx="18.4" cy="13" r="1.3" fill="#f2f2f2"/></svg>
<svg style="left:985px;top:727px" width="27" height="26" viewBox="0 0 27 26"><path d="M10 1.5 H24.5 V20 L16.5 24.5 V5.5 Z" fill="none" stroke="#e8205a" stroke-width="1.5" stroke-linejoin="round"/><path d="M10 1.5 L16.5 5.5" stroke="#e8205a" stroke-width="1.5"/><circle cx="8.5" cy="7.3" r="2.8" fill="#000" stroke="#f2f2f2" stroke-width="1.4"/><path d="M6 11 Q4 12 3 15.5 L4.5 16 L6.3 13.5 L6 18 L3.5 23.5 L5.3 24.3 L8.3 19 L10.5 24.3 L12.3 23.6 L10.4 17.5 L10.6 13.8 L12.5 15.8 L13.8 14.6 L11.2 11.3 Q8.5 10 6 11 Z" fill="#000" stroke="#f2f2f2" stroke-width="1.3" stroke-linejoin="round"/></svg>
<svg style="left:36.8px;top:754px" width="30.5" height="20" viewBox="0 0 30.5 20"><text x="2" y="13.3" font-size="12.3" fill="#e4e4e4" textLength="26.5" lengthAdjust="spacingAndGlyphs">Звук</text></svg>
<svg style="left:126.5px;top:754px" width="37.0" height="20" viewBox="0 0 37.0 20"><text x="2" y="13.3" font-size="12.3" fill="#e4e4e4" textLength="33.0" lengthAdjust="spacingAndGlyphs">Видео</text></svg>
<svg style="left:258.0px;top:754px" width="62.0" height="20" viewBox="0 0 62.0 20"><text x="2" y="13.3" font-size="12.3" fill="#e4e4e4" textLength="58.0" lengthAdjust="spacingAndGlyphs">Участники</text></svg>
<svg style="left:386.5px;top:754px" width="24.0" height="20" viewBox="0 0 24.0 20"><text x="2" y="13.3" font-size="12.3" fill="#e4e4e4" textLength="20.0" lengthAdjust="spacingAndGlyphs">Чат</text></svg>
<svg style="left:450.2px;top:754px" width="87.0" height="20" viewBox="0 0 87.0 20"><text x="2" y="13.3" font-size="12.3" fill="#e4e4e4" textLength="83.0" lengthAdjust="spacingAndGlyphs">Отреагировать</text></svg>
<svg style="left:557.8px;top:754px" width="69.5" height="20" viewBox="0 0 69.5 20"><text x="2" y="13.3" font-size="12.3" fill="#e4e4e4" textLength="65.5" lengthAdjust="spacingAndGlyphs">Поделиться</text></svg>
<svg style="left:647.1px;top:754px" width="81.0" height="20" viewBox="0 0 81.0 20"><text x="2" y="13.3" font-size="12.3" fill="#e4e4e4" textLength="77.0" lengthAdjust="spacingAndGlyphs">AI Companion</text></svg>
<svg style="left:740.0px;top:754px" width="77.0" height="20" viewBox="0 0 77.0 20"><text x="2" y="13.3" font-size="12.3" fill="#e4e4e4" textLength="73.0" lengthAdjust="spacingAndGlyphs">Приложения</text></svg>
<svg style="left:828.4px;top:754px" width="94.0" height="20" viewBox="0 0 94.0 20"><text x="2" y="13.3" font-size="12.3" fill="#e4e4e4" textLength="90.0" lengthAdjust="spacingAndGlyphs">Дополнительно</text></svg>
<svg style="left:978.4px;top:754px" width="38.5" height="20" viewBox="0 0 38.5 20"><text x="2" y="13.3" font-size="12.3" fill="#e4e4e4" textLength="34.5" lengthAdjust="spacingAndGlyphs">Выйти</text></svg>
<div class="a" style="left:1040px;top:92px;width:6px;height:626px;background:#0e0e0e;"></div>
<div class="a" style="left:1046px;top:92px;width:320px;height:676px;background:#ffffff;"></div>
<div class="a" style="left:1046px;top:92px;width:320px;height:1.5px;background:#0c0c0c;"></div>
<div class="a" style="left:1059px;top:144px;width:24px;height:24px;border-radius:7px;background:#d65c08"></div>
<div class="t" style="left:1066.30px;top:149.45px;font-size:14px;color:#fff;">Т</div>
<div class="a" style="left:1090px;top:143.3px;width:46px;height:37.5px;background:#f1f1f6;border-radius:11px;"></div>
<div class="a" style="left:1059px;top:209.5px;width:24px;height:24px;border-radius:7px;background:#9440b4"></div>
<div class="t" style="left:1063.80px;top:214.95px;font-size:14px;color:#fff;">Ю</div>
<div class="a" style="left:1090px;top:208px;width:140.5px;height:37.5px;background:#f1f1f6;border-radius:11px;"></div>
<div class="a" style="left:1059px;top:274px;width:24px;height:24px;border-radius:7px;background:#364759"></div>
<div class="t" style="left:1065.80px;top:279.45px;font-size:14px;color:#fff;">Л</div>
<div class="a" style="left:1090px;top:273.2px;width:154.5px;height:37.5px;background:#f1f1f6;border-radius:11px;"></div>
<div class="a" style="left:1059px;top:339px;width:24px;height:24px;border-radius:7px;background:#179c80"></div>
<div class="t" style="left:1065.20px;top:344.45px;font-size:14px;color:#fff;">О</div>
<div class="a" style="left:1090px;top:338px;width:39.6px;height:37.5px;background:#f1f1f6;border-radius:11px;"></div>
<div class="a" style="left:1059px;top:404px;width:24px;height:24px;border-radius:7px;background:#d65c08"></div>
<div class="t" style="left:1065.80px;top:409.45px;font-size:14px;color:#fff;">А</div>
<div class="a" style="left:1090px;top:403.3px;width:46px;height:37.5px;background:#f1f1f6;border-radius:11px;"></div>
<div class="a" style="left:1059px;top:469px;width:24px;height:24px;border-radius:7px;overflow:hidden;background:radial-gradient(circle at 50% 45%,#8a8a7a 0,#6a7a58 35%,#3a5a30 70%,#2a4020 100%)"><div class="a" style="left:9px;top:6px;width:7px;height:8px;border-radius:50%;background:#c8b0a0"></div><div class="a" style="left:7px;top:13px;width:11px;height:11px;border-radius:40% 40% 0 0;background:#d8d8d8"></div></div>
<div class="a" style="left:1090px;top:468.4px;width:218.7px;height:57px;background:#f1f1f6;border-radius:11px;"></div>
<div class="a" style="left:1059px;top:554px;width:24px;height:24px;border-radius:7px;background:#179c74"></div>
<div class="t" style="left:1066.30px;top:559.45px;font-size:14px;color:#fff;">Т</div>
<div class="a" style="left:1090px;top:553px;width:47.7px;height:37.6px;background:#f1f1f6;border-radius:11px;"></div>
<div class="a" style="left:1046px;top:93.5px;width:320px;height:43px;background:#eef0f5;"></div>
<svg style="left:0;top:0" width="1366" height="768" viewBox="0 0 1366 768"><defs><clipPath id="chc"><rect x="1046" y="136.5" width="320" height="500"/></clipPath></defs><g clip-path="url(#chc)"><text x="1096.3" y="139.0" font-size="12.9" fill="#3c79d2" textLength="81.7" lengthAdjust="spacingAndGlyphs">Тетяна Анощенко</text><text x="1182.0" y="139.0" font-size="12.9" fill="#7b7f88" textLength="26.6" lengthAdjust="spacingAndGlyphs">кому</text><text x="1215.0" y="139.0" font-size="12.9" fill="#3c79d2" textLength="19.0" lengthAdjust="spacingAndGlyphs">Все</text><text x="1239.0" y="139.0" font-size="12.9" fill="#6f737c" textLength="26.0" lengthAdjust="spacingAndGlyphs">10:08</text><text x="1100.3" y="165.9" font-size="15" fill="#1f1f22" textLength="21.5" lengthAdjust="spacingAndGlyphs">так</text><text x="1096.3" y="203.5" font-size="12.9" fill="#3c79d2" textLength="86.7" lengthAdjust="spacingAndGlyphs">Юлія Аркушин</text><text x="1187.4" y="203.5" font-size="12.9" fill="#7b7f88" textLength="28.6" lengthAdjust="spacingAndGlyphs">кому</text><text x="1220.3" y="203.5" font-size="12.9" fill="#3c79d2" textLength="19.0" lengthAdjust="spacingAndGlyphs">Все</text><text x="1244.5" y="203.5" font-size="12.9" fill="#6f737c" textLength="26.3" lengthAdjust="spacingAndGlyphs">10:08</text><text x="1100.3" y="230.6" font-size="15" fill="#1f1f22" textLength="116.0" lengthAdjust="spacingAndGlyphs">Використовуємо</text><text x="1096.3" y="268.3" font-size="12.9" fill="#3c79d2" textLength="168.4" lengthAdjust="spacingAndGlyphs">Людмила Понкратова Сум...</text><text x="1269.8" y="268.3" font-size="12.9" fill="#7b7f88" textLength="27.7" lengthAdjust="spacingAndGlyphs">кому</text><text x="1302.0" y="268.3" font-size="12.9" fill="#3c79d2" textLength="19.3" lengthAdjust="spacingAndGlyphs">Все</text><text x="1326.4" y="268.3" font-size="12.9" fill="#6f737c" textLength="26.2" lengthAdjust="spacingAndGlyphs">10:08</text><text x="1100.3" y="295.8" font-size="15" fill="#1f1f22" textLength="129.0" lengthAdjust="spacingAndGlyphs">Так, використовую</text><text x="1096.3" y="333.5" font-size="12.9" fill="#3c79d2" textLength="99.4" lengthAdjust="spacingAndGlyphs">Ольга Булгакова</text><text x="1200.0" y="333.5" font-size="12.9" fill="#7b7f88" textLength="29.6" lengthAdjust="spacingAndGlyphs">кому</text><text x="1233.8" y="333.5" font-size="12.9" fill="#3c79d2" textLength="18.6" lengthAdjust="spacingAndGlyphs">Все</text><text x="1257.6" y="333.5" font-size="12.9" fill="#6f737c" textLength="26.0" lengthAdjust="spacingAndGlyphs">10:08</text><text x="1100.3" y="360.6" font-size="15" fill="#1f1f22" textLength="8.0" lengthAdjust="spacingAndGlyphs">+</text><text x="1096.3" y="398.5" font-size="12.9" fill="#3c79d2" textLength="103.3" lengthAdjust="spacingAndGlyphs">Алла Гончаренко</text><text x="1204.5" y="398.5" font-size="12.9" fill="#7b7f88" textLength="29.3" lengthAdjust="spacingAndGlyphs">кому</text><text x="1238.0" y="398.5" font-size="12.9" fill="#3c79d2" textLength="18.6" lengthAdjust="spacingAndGlyphs">Все</text><text x="1261.5" y="398.5" font-size="12.9" fill="#6f737c" textLength="26.7" lengthAdjust="spacingAndGlyphs">10:08</text><text x="1100.3" y="425.9" font-size="15" fill="#1f1f22" textLength="21.5" lengthAdjust="spacingAndGlyphs">так</text><text x="1096.3" y="463.5" font-size="12.9" fill="#3c79d2" textLength="104.3" lengthAdjust="spacingAndGlyphs">Оксана Токовило</text><text x="1205.5" y="463.5" font-size="12.9" fill="#7b7f88" textLength="29.3" lengthAdjust="spacingAndGlyphs">кому</text><text x="1238.7" y="463.5" font-size="12.9" fill="#3c79d2" textLength="18.9" lengthAdjust="spacingAndGlyphs">Все</text><text x="1262.5" y="463.5" font-size="12.9" fill="#6f737c" textLength="26.7" lengthAdjust="spacingAndGlyphs">10:08</text><text x="1100.3" y="491.0" font-size="15" fill="#1f1f22" textLength="183.0" lengthAdjust="spacingAndGlyphs">Так, використовую років 5</text><text x="1100.3" y="511.0" font-size="15" fill="#1f1f22" textLength="26.0" lengthAdjust="spacingAndGlyphs">вже</text><text x="1096.3" y="548.3" font-size="12.9" fill="#3c79d2" textLength="108.7" lengthAdjust="spacingAndGlyphs">Тетяна Кириленко</text><text x="1209.4" y="548.3" font-size="12.9" fill="#7b7f88" textLength="29.3" lengthAdjust="spacingAndGlyphs">кому</text><text x="1242.6" y="548.3" font-size="12.9" fill="#3c79d2" textLength="18.9" lengthAdjust="spacingAndGlyphs">Все</text><text x="1266.4" y="548.3" font-size="12.9" fill="#6f737c" textLength="26.6" lengthAdjust="spacingAndGlyphs">10:08</text><text x="1100.3" y="575.6" font-size="15" fill="#1f1f22" textLength="25.0" lengthAdjust="spacingAndGlyphs">Так</text></g></svg>
<svg style="left:1314px;top:107px" width="16" height="16" viewBox="0 0 16 16"><path d="M6.5 2 H4 Q1.8 2 1.8 4.2 V11.8 Q1.8 14 4 14 H11.8 Q14 14 14 11.8 V9.5" fill="none" stroke="#666b73" stroke-width="2"/><path d="M8.5 2 H14 V7.5 M14 2 L7.2 8.8" fill="none" stroke="#666b73" stroke-width="2"/></svg>
<svg style="left:1342px;top:109px" width="12" height="12" viewBox="0 0 12 12"><path d="M1 1 L11 11 M11 1 L1 11" stroke="#666b73" stroke-width="1.4"/></svg>
<div class="a" style="left:1357px;top:136.5px;width:9px;height:482px;background:#f3f3f5;"></div>
<div class="a" style="left:1357.5px;top:575px;width:7.5px;height:43.5px;background:#a3a3a8;border-radius:4px;"></div>
<svg style="left:1097px;top:598px" width="17" height="16" viewBox="0 0 17 16"><path d="M8 3.5 H3.5 Q1.5 3.5 1.5 5.5 V10 Q1.5 12 3.5 12 H4.5 V14.5 L7.5 12 H10.5 Q12.5 12 12.5 10 V8" fill="none" stroke="#6b6f78" stroke-width="1.3"/><path d="M13.3 1 V6.5 M10.5 3.8 H16" stroke="#6b6f78" stroke-width="1.3"/></svg>
<svg style="left:1121px;top:598px" width="17" height="16" viewBox="0 0 17 16"><path d="M11.8 4.5 A6 6 0 1 1 9 2.2" fill="none" stroke="#6b6f78" stroke-width="1.3"/><circle cx="5" cy="7.5" r="0.9" fill="#6b6f78"/><circle cx="8.6" cy="7.5" r="0.9" fill="#6b6f78"/><path d="M4.3 10 Q6.8 12.5 9.3 10" fill="none" stroke="#6b6f78" stroke-width="1.2"/><path d="M13.3 0.5 V6 M10.5 3.2 H16" stroke="#6b6f78" stroke-width="1.3"/></svg>
<div class="a" style="left:1195px;top:590px;width:160.3px;height:23.8px;background:#e0282e;border-radius:3px;"></div>
<svg style="left:1334px;top:594px" width="12" height="15" viewBox="0 0 12 15"><path d="M6 1 V13 M1.5 8.5 L6 13 L10.5 8.5" stroke="#fff" stroke-width="1.6" fill="none"/></svg>
<div class="a" style="left:1046px;top:619px;width:311px;height:30px;background:#f4f5fa;"></div>
<div class="a" style="left:1046px;top:648.5px;width:320px;height:0.8px;background:#e6e7ec;"></div>
<svg style="left:1074px;top:627px" width="15" height="15" viewBox="0 0 15 15"><circle cx="5.5" cy="3.8" r="2.8" fill="none" stroke="#6b7080" stroke-width="1.1"/><path d="M1 13.5 Q1 8.5 6 8.5" fill="none" stroke="#6b7080" stroke-width="1.1"/><path d="M10.5 7.5 L14 8.7 V11 Q14 13.5 10.5 14.6 Q7 13.5 7 11 V8.7 Z" fill="#1c6fe0"/></svg>
<div class="a" style="left:1099.8px;top:664.1px;width:59.4px;height:22.5px;background:#0e71eb;border-radius:5px;"></div>
<svg style="left:1142px;top:672px" width="10" height="7" viewBox="0 0 10 7"><path d="M1.5 1.5 L5 5 L8.5 1.5" stroke="#fff" stroke-width="1.6" fill="none"/></svg>
<svg style="left:1061px;top:750px" width="17" height="16" viewBox="0 0 17 16"><path d="M1 2 H7 M4 2 V8" stroke="#6b6f78" stroke-width="1.3"/><path d="M6 13.5 L12.5 6.5 Q14 5 15.3 6.3 Q16.5 7.6 15 9 L8.5 15.5 Q7 16 6.2 15.3 Q5.4 14.5 6 13.5 Z" fill="none" stroke="#6b6f78" stroke-width="1.3"/></svg>
<svg style="left:1094px;top:750px" width="16" height="16" viewBox="0 0 16 16"><circle cx="8" cy="8" r="6.8" fill="none" stroke="#6b6f78" stroke-width="1.3"/><circle cx="5.6" cy="6.5" r="0.9" fill="#6b6f78"/><circle cx="10.4" cy="6.5" r="0.9" fill="#6b6f78"/><path d="M4.8 9.6 Q8 12.6 11.2 9.6" fill="none" stroke="#6b6f78" stroke-width="1.2"/></svg>
<svg style="left:1128px;top:750px" width="14" height="17" viewBox="0 0 14 17"><path d="M1.5 3 Q1.5 1.2 3.3 1.2 H8.5 L12.5 5.2 V14 Q12.5 15.8 10.7 15.8 H3.3 Q1.5 15.8 1.5 14 Z M8.5 1.2 V5.2 H12.5" fill="none" stroke="#6b6f78" stroke-width="1.3"/></svg>
<svg style="left:1159px;top:750px" width="17" height="17" viewBox="0 0 17 17"><path d="M8 1.5 H4 Q1.5 1.5 1.5 4 V10 Q1.5 12.5 4 12.5 H8 M12.5 7 V4 Q12.5 1.5 10 1.5" fill="none" stroke="#6b6f78" stroke-width="1.3"/><path d="M13 10 V16 M10 13 H16" stroke="#6b6f78" stroke-width="1.3"/></svg>
<svg style="left:1188px;top:755px" width="9" height="6" viewBox="0 0 9 6"><path d="M1 1 L4.5 4.5 L8 1" stroke="#6b6f78" stroke-width="1.3" fill="none"/></svg>
<div class="a" style="left:1331.5px;top:746px;width:24px;height:24px;background:#f0f0f3;border-radius:6px;"></div>
<svg style="left:1336px;top:751px" width="14" height="14" viewBox="0 0 14 14"><path d="M1 6.5 L13 1 L8.5 13 L6.8 8.2 Z" fill="#8e9199"/><path d="M6.8 8.2 L13 1" stroke="#f0f0f3" stroke-width="0.9"/></svg>
<svg style="left:0;top:0" width="1366" height="768" viewBox="0 0 1366 768"><text x="1060.5" y="120.0" font-size="13.1" fill="#1c2033" font-weight="700" textLength="240.0" lengthAdjust="spacingAndGlyphs">XIII Всеукраїнська онлайн-школа бі...</text><text x="1207.5" y="606.3" font-size="12.3" fill="#ffffff" textLength="121.5" lengthAdjust="spacingAndGlyphs">Новые сообщения: 14</text><text x="1092.8" y="631.0" font-size="12" fill="#4a505c" textLength="243.5" lengthAdjust="spacingAndGlyphs">Кто может видеть ваши сообщения? Запись</text><text x="1092.8" y="646.5" font-size="12" fill="#4a505c" textLength="53.5" lengthAdjust="spacingAndGlyphs">включена</text><text x="1059.3" y="679.5" font-size="12" fill="#2a2d34" textLength="31.0" lengthAdjust="spacingAndGlyphs">Кому:</text><text x="1114.3" y="679.6" font-size="12.3" fill="#ffffff" textLength="16.5" lengthAdjust="spacingAndGlyphs">Все</text><text x="1063.2" y="709.3" font-size="14.6" fill="#8b8e96" textLength="191.0" lengthAdjust="spacingAndGlyphs">Введите здесь сообщение...</text></svg>
</body></html>
